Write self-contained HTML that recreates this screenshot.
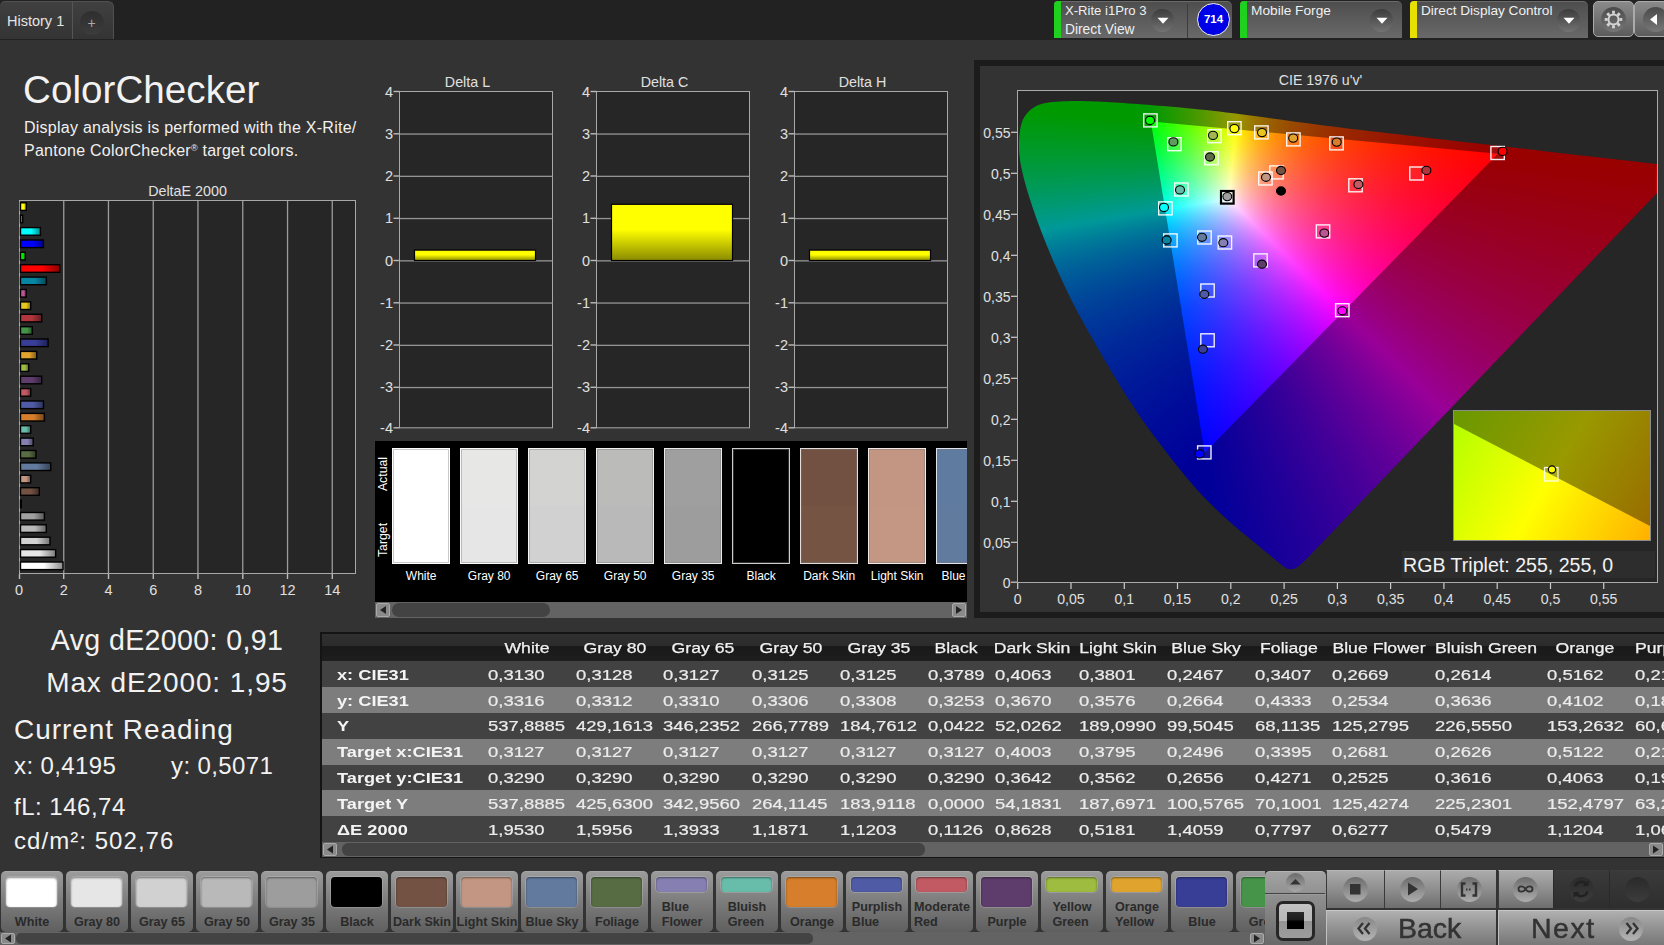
<!DOCTYPE html>
<html lang="en"><head><meta charset="utf-8"><title>ColorChecker</title>
<style>
html,body{margin:0;padding:0;width:1664px;height:945px;overflow:hidden}
body{width:1664px;height:945px;overflow:hidden;background:#333;font-family:"Liberation Sans",sans-serif;color:#eee;position:relative}
div,svg{position:absolute;box-sizing:border-box}
svg{left:0;top:0;overflow:visible}
svg text{font-family:"Liberation Sans",sans-serif}
.cie{inset:0;background:#000;isolation:isolate}
.cl{inset:0;mix-blend-mode:lighten}
.cdim{inset:0;background:rgba(0,0,0,.4)}
</style></head>
<body>
<div style="left:0;top:0;width:1664px;height:945px;overflow:hidden">
<div style="left:0;top:0;width:1664px;height:39.6px;background:#222"></div>
<div style="left:0;top:1px;width:114px;height:38px;background:linear-gradient(#404040,#343434);border:1px solid #505050;border-bottom:none;border-left:none;border-radius:5px 6px 0 0"></div>
<div style="left:72px;top:2px;width:1px;height:37px;background:#555"></div>
<div style="left:80px;top:11px;width:24px;height:24px;border-radius:12px;background:linear-gradient(#2e2e2e,#3c3c3c)"></div>
<div style="left:7px;top:13px;font-size:14.5px;color:#e4e4e4;white-space:nowrap">History 1</div>
<div style="left:87.500px;top:15px;font-size:14px;color:#aaa">+</div>
<div style="left:1054px;top:1px;width:178px;height:37px;background:linear-gradient(#4e4e4e,#696969);border-radius:4px 5px 0 0;border-top:1px solid #6a6a6a"></div><div style="left:1054px;top:1px;width:7px;height:37px;background:#1fd01f;border-radius:4px 0 0 0"></div><div style="left:1065px;top:3px;font-size:13.1px;color:#f0f0f0;white-space:nowrap">X-Rite i1Pro 3</div><div style="left:1065px;top:22px;font-size:13.8px;color:#f0f0f0;white-space:nowrap">Direct View</div><div style="left:1151px;top:8.500px;width:23px;height:23px;border-radius:12px;background:linear-gradient(#3c3c3c,#727272)"></div><svg width="1664" height="40"><path d="M1157.5 17.700 h11 l-5.500 6 z" fill="#fff"/></svg>
<div style="left:1187px;top:4px;width:1px;height:34px;background:#3c3c3c"></div>
<div style="left:1197px;top:3px;width:33px;height:33px;border-radius:17px;background:#0000e6;border:1.5px solid #f4f4f4"></div>
<div style="left:1197px;top:12.500px;width:33px;text-align:center;font-size:11.5px;font-weight:bold;color:#fff">714</div>
<div style="left:1240px;top:1px;width:162px;height:37px;background:linear-gradient(#4e4e4e,#696969);border-radius:4px 5px 0 0;border-top:1px solid #6a6a6a"></div><div style="left:1240px;top:1px;width:7px;height:37px;background:#1fd01f;border-radius:4px 0 0 0"></div><div style="left:1251px;top:3px;font-size:13.7px;color:#f0f0f0;white-space:nowrap">Mobile Forge</div><div style="left:1370px;top:8.500px;width:23px;height:23px;border-radius:12px;background:linear-gradient(#3c3c3c,#727272)"></div><svg width="1664" height="40"><path d="M1376.5 17.700 h11 l-5.500 6 z" fill="#fff"/></svg>
<div style="left:1410px;top:1px;width:178px;height:37px;background:linear-gradient(#4e4e4e,#696969);border-radius:4px 5px 0 0;border-top:1px solid #6a6a6a"></div><div style="left:1410px;top:1px;width:7px;height:37px;background:#e8e000;border-radius:4px 0 0 0"></div><div style="left:1421px;top:3px;font-size:13.6px;color:#f0f0f0;white-space:nowrap">Direct Display Control</div><div style="left:1557px;top:8.500px;width:23px;height:23px;border-radius:12px;background:linear-gradient(#3c3c3c,#727272)"></div><svg width="1664" height="40"><path d="M1563.5 17.700 h11 l-5.500 6 z" fill="#fff"/></svg>
<div style="left:1593px;top:1px;width:41px;height:36px;background:linear-gradient(#8a8a8a,#5c5c5c);border:1px solid #aaa;border-radius:5px"></div>
<div style="left:1634px;top:1px;width:41px;height:36px;background:linear-gradient(#8a8a8a,#5c5c5c);border:1px solid #aaa;border-radius:5px"></div>
<div style="left:1601px;top:7px;width:25px;height:25px;border-radius:13px;background:linear-gradient(#4a4a4a,#777)"></div>
<div style="left:1643px;top:7px;width:25px;height:25px;border-radius:13px;background:linear-gradient(#4a4a4a,#777)"></div>
<svg width="1664" height="40"><g transform="translate(1613.5,19.5)" fill="none" stroke="#d4d4d4"><circle r="5" stroke-width="2"/> <rect x="-1.4" y="-8.8" width="2.8" height="3" fill="#d4d4d4" stroke="none" transform="rotate(0)"/> <rect x="-1.4" y="-8.8" width="2.8" height="3" fill="#d4d4d4" stroke="none" transform="rotate(45)"/> <rect x="-1.4" y="-8.8" width="2.8" height="3" fill="#d4d4d4" stroke="none" transform="rotate(90)"/> <rect x="-1.4" y="-8.8" width="2.8" height="3" fill="#d4d4d4" stroke="none" transform="rotate(135)"/> <rect x="-1.4" y="-8.8" width="2.8" height="3" fill="#d4d4d4" stroke="none" transform="rotate(180)"/> <rect x="-1.4" y="-8.8" width="2.8" height="3" fill="#d4d4d4" stroke="none" transform="rotate(225)"/> <rect x="-1.4" y="-8.8" width="2.8" height="3" fill="#d4d4d4" stroke="none" transform="rotate(270)"/> <rect x="-1.4" y="-8.8" width="2.8" height="3" fill="#d4d4d4" stroke="none" transform="rotate(315)"/></g><path d="M1657 14 v11 l-7 -5.5 z" fill="#fff"/></svg>
<div style="left:23px;top:68px;font-size:38.6px;color:#f2f2f2;white-space:nowrap;letter-spacing:0.05px">ColorChecker</div>
<div style="left:24px;top:115.5px;font-size:16px;letter-spacing:.25px;line-height:23px;color:#f0f0f0;white-space:nowrap">Display analysis is performed with the X-Rite/<br>Pantone ColorChecker<span style="font-size:9px;line-height:0;position:relative;top:-5px">®</span> target colors.</div>
<svg width="1664" height="945"><defs><linearGradient id="b0"><stop offset="0" stop-color="#ffff00"/><stop offset=".55" stop-color="#ffff00"/><stop offset="1" stop-color="#8c8c00"/></linearGradient><linearGradient id="b1"><stop offset="0" stop-color="#cc44cc"/><stop offset=".55" stop-color="#cc44cc"/><stop offset="1" stop-color="#702570"/></linearGradient><linearGradient id="b2"><stop offset="0" stop-color="#00ffff"/><stop offset=".55" stop-color="#00ffff"/><stop offset="1" stop-color="#008c8c"/></linearGradient><linearGradient id="b3"><stop offset="0" stop-color="#0000ff"/><stop offset=".55" stop-color="#0000ff"/><stop offset="1" stop-color="#00008c"/></linearGradient><linearGradient id="b4"><stop offset="0" stop-color="#00ee00"/><stop offset=".55" stop-color="#00ee00"/><stop offset="1" stop-color="#008200"/></linearGradient><linearGradient id="b5"><stop offset="0" stop-color="#ff0000"/><stop offset=".55" stop-color="#ff0000"/><stop offset="1" stop-color="#8c0000"/></linearGradient><linearGradient id="b6"><stop offset="0" stop-color="#0885a1"/><stop offset=".55" stop-color="#0885a1"/><stop offset="1" stop-color="#044958"/></linearGradient><linearGradient id="b7"><stop offset="0" stop-color="#bb5695"/><stop offset=".55" stop-color="#bb5695"/><stop offset="1" stop-color="#662f51"/></linearGradient><linearGradient id="b8"><stop offset="0" stop-color="#e7c71f"/><stop offset=".55" stop-color="#e7c71f"/><stop offset="1" stop-color="#7f6d11"/></linearGradient><linearGradient id="b9"><stop offset="0" stop-color="#af363c"/><stop offset=".55" stop-color="#af363c"/><stop offset="1" stop-color="#601d21"/></linearGradient><linearGradient id="b10"><stop offset="0" stop-color="#469449"/><stop offset=".55" stop-color="#469449"/><stop offset="1" stop-color="#265128"/></linearGradient><linearGradient id="b11"><stop offset="0" stop-color="#383d96"/><stop offset=".55" stop-color="#383d96"/><stop offset="1" stop-color="#1e2152"/></linearGradient><linearGradient id="b12"><stop offset="0" stop-color="#e0a32e"/><stop offset=".55" stop-color="#e0a32e"/><stop offset="1" stop-color="#7b5919"/></linearGradient><linearGradient id="b13"><stop offset="0" stop-color="#9dbc40"/><stop offset=".55" stop-color="#9dbc40"/><stop offset="1" stop-color="#566723"/></linearGradient><linearGradient id="b14"><stop offset="0" stop-color="#5e3c6c"/><stop offset=".55" stop-color="#5e3c6c"/><stop offset="1" stop-color="#33213b"/></linearGradient><linearGradient id="b15"><stop offset="0" stop-color="#c15a63"/><stop offset=".55" stop-color="#c15a63"/><stop offset="1" stop-color="#6a3136"/></linearGradient><linearGradient id="b16"><stop offset="0" stop-color="#505ba6"/><stop offset=".55" stop-color="#505ba6"/><stop offset="1" stop-color="#2c325b"/></linearGradient><linearGradient id="b17"><stop offset="0" stop-color="#d67e2c"/><stop offset=".55" stop-color="#d67e2c"/><stop offset="1" stop-color="#754518"/></linearGradient><linearGradient id="b18"><stop offset="0" stop-color="#67bdaa"/><stop offset=".55" stop-color="#67bdaa"/><stop offset="1" stop-color="#38675d"/></linearGradient><linearGradient id="b19"><stop offset="0" stop-color="#8580b1"/><stop offset=".55" stop-color="#8580b1"/><stop offset="1" stop-color="#494661"/></linearGradient><linearGradient id="b20"><stop offset="0" stop-color="#576c43"/><stop offset=".55" stop-color="#576c43"/><stop offset="1" stop-color="#2f3b24"/></linearGradient><linearGradient id="b21"><stop offset="0" stop-color="#627a9d"/><stop offset=".55" stop-color="#627a9d"/><stop offset="1" stop-color="#354356"/></linearGradient><linearGradient id="b22"><stop offset="0" stop-color="#c29682"/><stop offset=".55" stop-color="#c29682"/><stop offset="1" stop-color="#6a5247"/></linearGradient><linearGradient id="b23"><stop offset="0" stop-color="#735244"/><stop offset=".55" stop-color="#735244"/><stop offset="1" stop-color="#3f2d25"/></linearGradient><linearGradient id="b24"><stop offset="0" stop-color="#000000"/><stop offset=".55" stop-color="#000000"/><stop offset="1" stop-color="#000000"/></linearGradient><linearGradient id="b25"><stop offset="0" stop-color="#a0a0a0"/><stop offset=".55" stop-color="#a0a0a0"/><stop offset="1" stop-color="#585858"/></linearGradient><linearGradient id="b26"><stop offset="0" stop-color="#b9b9b9"/><stop offset=".55" stop-color="#b9b9b9"/><stop offset="1" stop-color="#656565"/></linearGradient><linearGradient id="b27"><stop offset="0" stop-color="#d2d2d2"/><stop offset=".55" stop-color="#d2d2d2"/><stop offset="1" stop-color="#737373"/></linearGradient><linearGradient id="b28"><stop offset="0" stop-color="#e6e6e6"/><stop offset=".55" stop-color="#e6e6e6"/><stop offset="1" stop-color="#7e7e7e"/></linearGradient><linearGradient id="b29"><stop offset="0" stop-color="#ffffff"/><stop offset=".55" stop-color="#ffffff"/><stop offset="1" stop-color="#8c8c8c"/></linearGradient><linearGradient id="yb" x1="0" y1="0" x2="0" y2="1"><stop offset="0" stop-color="#ffff00"/><stop offset=".45" stop-color="#ffff00"/><stop offset="1" stop-color="#8a8a00"/></linearGradient></defs><rect x="19.5" y="200.5" width="336" height="373" fill="#262626" stroke="#a8a8a8"/><rect x="63.1" y="201" width="1.3" height="372" fill="#9c9c9c"/><rect x="63.0" y="574" width="1.4" height="5" fill="#bbb"/><rect x="107.8" y="201" width="1.3" height="372" fill="#9c9c9c"/><rect x="107.8" y="574" width="1.4" height="5" fill="#bbb"/><rect x="152.6" y="201" width="1.3" height="372" fill="#9c9c9c"/><rect x="152.6" y="574" width="1.4" height="5" fill="#bbb"/><rect x="197.3" y="201" width="1.3" height="372" fill="#9c9c9c"/><rect x="197.3" y="574" width="1.4" height="5" fill="#bbb"/><rect x="242.1" y="201" width="1.3" height="372" fill="#9c9c9c"/><rect x="242.1" y="574" width="1.4" height="5" fill="#bbb"/><rect x="286.9" y="201" width="1.3" height="372" fill="#9c9c9c"/><rect x="286.8" y="574" width="1.4" height="5" fill="#bbb"/><rect x="331.6" y="201" width="1.3" height="372" fill="#9c9c9c"/><rect x="331.6" y="574" width="1.4" height="5" fill="#bbb"/><rect x="18.8" y="574" width="1.4" height="5" fill="#bbb"/><text x="19.0" y="595" font-size="14.5" text-anchor="middle" fill="#e0e0e0" font-weight="normal" >0</text><text x="63.8" y="595" font-size="14.5" text-anchor="middle" fill="#e0e0e0" font-weight="normal" >2</text><text x="108.5" y="595" font-size="14.5" text-anchor="middle" fill="#e0e0e0" font-weight="normal" >4</text><text x="153.2" y="595" font-size="14.5" text-anchor="middle" fill="#e0e0e0" font-weight="normal" >6</text><text x="198.0" y="595" font-size="14.5" text-anchor="middle" fill="#e0e0e0" font-weight="normal" >8</text><text x="242.8" y="595" font-size="14.5" text-anchor="middle" fill="#e0e0e0" font-weight="normal" >10</text><text x="287.5" y="595" font-size="14.5" text-anchor="middle" fill="#e0e0e0" font-weight="normal" >12</text><text x="332.2" y="595" font-size="14.5" text-anchor="middle" fill="#e0e0e0" font-weight="normal" >14</text><text x="187.5" y="196" font-size="14.3" text-anchor="middle" fill="#e0e0e0" font-weight="normal" >DeltaE 2000</text><rect x="20.5" y="202.8" width="5.8" height="7.6" fill="url(#b0)" stroke="#000" stroke-width="1.4"/><rect x="20.5" y="215.2" width="2.2" height="7.6" fill="url(#b1)" stroke="#000" stroke-width="1.4"/><rect x="20.5" y="227.6" width="19.9" height="7.6" fill="url(#b2)" stroke="#000" stroke-width="1.4"/><rect x="20.5" y="240.0" width="22.9" height="7.6" fill="url(#b3)" stroke="#000" stroke-width="1.4"/><rect x="20.5" y="252.3" width="4.8" height="7.6" fill="url(#b4)" stroke="#000" stroke-width="1.4"/><rect x="20.5" y="264.7" width="39.2" height="7.6" fill="url(#b5)" stroke="#000" stroke-width="1.4"/><rect x="20.5" y="277.1" width="25.9" height="7.6" fill="url(#b6)" stroke="#000" stroke-width="1.4"/><rect x="20.5" y="289.5" width="5.7" height="7.6" fill="url(#b7)" stroke="#000" stroke-width="1.4"/><rect x="20.5" y="301.9" width="10.2" height="7.6" fill="url(#b8)" stroke="#000" stroke-width="1.4"/><rect x="20.5" y="314.3" width="21.2" height="7.6" fill="url(#b9)" stroke="#000" stroke-width="1.4"/><rect x="20.5" y="326.7" width="11.8" height="7.6" fill="url(#b10)" stroke="#000" stroke-width="1.4"/><rect x="20.5" y="339.0" width="27.6" height="7.6" fill="url(#b11)" stroke="#000" stroke-width="1.4"/><rect x="20.5" y="351.4" width="16.2" height="7.6" fill="url(#b12)" stroke="#000" stroke-width="1.4"/><rect x="20.5" y="363.8" width="8.2" height="7.6" fill="url(#b13)" stroke="#000" stroke-width="1.4"/><rect x="20.5" y="376.2" width="21.2" height="7.6" fill="url(#b14)" stroke="#000" stroke-width="1.4"/><rect x="20.5" y="388.6" width="10.2" height="7.6" fill="url(#b15)" stroke="#000" stroke-width="1.4"/><rect x="20.5" y="401.0" width="23.0" height="7.6" fill="url(#b16)" stroke="#000" stroke-width="1.4"/><rect x="20.5" y="413.4" width="23.9" height="7.6" fill="url(#b17)" stroke="#000" stroke-width="1.4"/><rect x="20.5" y="425.7" width="10.2" height="7.6" fill="url(#b18)" stroke="#000" stroke-width="1.4"/><rect x="20.5" y="438.1" width="12.7" height="7.6" fill="url(#b19)" stroke="#000" stroke-width="1.4"/><rect x="20.5" y="450.5" width="15.5" height="7.6" fill="url(#b20)" stroke="#000" stroke-width="1.4"/><rect x="20.5" y="462.9" width="30.2" height="7.6" fill="url(#b21)" stroke="#000" stroke-width="1.4"/><rect x="20.5" y="475.3" width="10.2" height="7.6" fill="url(#b22)" stroke="#000" stroke-width="1.4"/><rect x="20.5" y="487.7" width="18.8" height="7.6" fill="url(#b23)" stroke="#000" stroke-width="1.4"/><rect x="20.5" y="500.1" width="0.8" height="7.6" fill="url(#b24)" stroke="#000" stroke-width="1.4"/><rect x="20.5" y="512.5" width="23.9" height="7.6" fill="url(#b25)" stroke="#000" stroke-width="1.4"/><rect x="20.5" y="524.8" width="25.8" height="7.6" fill="url(#b26)" stroke="#000" stroke-width="1.4"/><rect x="20.5" y="537.2" width="29.5" height="7.6" fill="url(#b27)" stroke="#000" stroke-width="1.4"/><rect x="20.5" y="549.6" width="35.1" height="7.6" fill="url(#b28)" stroke="#000" stroke-width="1.4"/><rect x="20.5" y="562.0" width="42.5" height="7.6" fill="url(#b29)" stroke="#000" stroke-width="1.4"/><rect x="399.5" y="91.5" width="153.0" height="336.3" fill="#262626" stroke="#a8a8a8"/><rect x="393.5" y="427.1" width="6" height="1.4" fill="#bbb"/><text x="393.0" y="432.8" font-size="14.5" text-anchor="end" fill="#e0e0e0" font-weight="normal" >-4</text><rect x="399.5" y="386.9" width="153.0" height="1.3" fill="#949494"/><rect x="393.5" y="386.6" width="6" height="1.4" fill="#bbb"/><text x="393.0" y="392.2" font-size="14.5" text-anchor="end" fill="#e0e0e0" font-weight="normal" >-3</text><rect x="399.5" y="344.7" width="153.0" height="1.3" fill="#949494"/><rect x="393.5" y="344.3" width="6" height="1.4" fill="#bbb"/><text x="393.0" y="350.0" font-size="14.5" text-anchor="end" fill="#e0e0e0" font-weight="normal" >-2</text><rect x="399.5" y="302.4" width="153.0" height="1.3" fill="#949494"/><rect x="393.5" y="302.1" width="6" height="1.4" fill="#bbb"/><text x="393.0" y="307.8" font-size="14.5" text-anchor="end" fill="#e0e0e0" font-weight="normal" >-1</text><rect x="399.5" y="260.2" width="153.0" height="1.3" fill="#949494"/><rect x="393.5" y="259.8" width="6" height="1.4" fill="#bbb"/><text x="393.0" y="265.5" font-size="14.5" text-anchor="end" fill="#e0e0e0" font-weight="normal" >0</text><rect x="399.5" y="217.9" width="153.0" height="1.3" fill="#949494"/><rect x="393.5" y="217.6" width="6" height="1.4" fill="#bbb"/><text x="393.0" y="223.2" font-size="14.5" text-anchor="end" fill="#e0e0e0" font-weight="normal" >1</text><rect x="399.5" y="175.7" width="153.0" height="1.3" fill="#949494"/><rect x="393.5" y="175.3" width="6" height="1.4" fill="#bbb"/><text x="393.0" y="181.0" font-size="14.5" text-anchor="end" fill="#e0e0e0" font-weight="normal" >2</text><rect x="399.5" y="133.4" width="153.0" height="1.3" fill="#949494"/><rect x="393.5" y="133.1" width="6" height="1.4" fill="#bbb"/><text x="393.0" y="138.8" font-size="14.5" text-anchor="end" fill="#e0e0e0" font-weight="normal" >3</text><rect x="393.5" y="90.8" width="6" height="1.4" fill="#bbb"/><text x="393.0" y="96.5" font-size="14.5" text-anchor="end" fill="#e0e0e0" font-weight="normal" >4</text><text x="467.5" y="87" font-size="14.3" text-anchor="middle" fill="#e0e0e0" font-weight="normal" >Delta L</text><rect x="414.5" y="250.1" width="121.0" height="10.4" fill="url(#yb)" stroke="#000" stroke-width="1.2"/><rect x="596.5" y="91.5" width="153.0" height="336.3" fill="#262626" stroke="#a8a8a8"/><rect x="590.5" y="427.1" width="6" height="1.4" fill="#bbb"/><text x="590.0" y="432.8" font-size="14.5" text-anchor="end" fill="#e0e0e0" font-weight="normal" >-4</text><rect x="596.5" y="386.9" width="153.0" height="1.3" fill="#949494"/><rect x="590.5" y="386.6" width="6" height="1.4" fill="#bbb"/><text x="590.0" y="392.2" font-size="14.5" text-anchor="end" fill="#e0e0e0" font-weight="normal" >-3</text><rect x="596.5" y="344.7" width="153.0" height="1.3" fill="#949494"/><rect x="590.5" y="344.3" width="6" height="1.4" fill="#bbb"/><text x="590.0" y="350.0" font-size="14.5" text-anchor="end" fill="#e0e0e0" font-weight="normal" >-2</text><rect x="596.5" y="302.4" width="153.0" height="1.3" fill="#949494"/><rect x="590.5" y="302.1" width="6" height="1.4" fill="#bbb"/><text x="590.0" y="307.8" font-size="14.5" text-anchor="end" fill="#e0e0e0" font-weight="normal" >-1</text><rect x="596.5" y="260.2" width="153.0" height="1.3" fill="#949494"/><rect x="590.5" y="259.8" width="6" height="1.4" fill="#bbb"/><text x="590.0" y="265.5" font-size="14.5" text-anchor="end" fill="#e0e0e0" font-weight="normal" >0</text><rect x="596.5" y="217.9" width="153.0" height="1.3" fill="#949494"/><rect x="590.5" y="217.6" width="6" height="1.4" fill="#bbb"/><text x="590.0" y="223.2" font-size="14.5" text-anchor="end" fill="#e0e0e0" font-weight="normal" >1</text><rect x="596.5" y="175.7" width="153.0" height="1.3" fill="#949494"/><rect x="590.5" y="175.3" width="6" height="1.4" fill="#bbb"/><text x="590.0" y="181.0" font-size="14.5" text-anchor="end" fill="#e0e0e0" font-weight="normal" >2</text><rect x="596.5" y="133.4" width="153.0" height="1.3" fill="#949494"/><rect x="590.5" y="133.1" width="6" height="1.4" fill="#bbb"/><text x="590.0" y="138.8" font-size="14.5" text-anchor="end" fill="#e0e0e0" font-weight="normal" >3</text><rect x="590.5" y="90.8" width="6" height="1.4" fill="#bbb"/><text x="590.0" y="96.5" font-size="14.5" text-anchor="end" fill="#e0e0e0" font-weight="normal" >4</text><text x="664.5" y="87" font-size="14.3" text-anchor="middle" fill="#e0e0e0" font-weight="normal" >Delta C</text><rect x="611.5" y="204.3" width="121.0" height="56.2" fill="url(#yb)" stroke="#000" stroke-width="1.2"/><rect x="794.5" y="91.5" width="153.0" height="336.3" fill="#262626" stroke="#a8a8a8"/><rect x="788.5" y="427.1" width="6" height="1.4" fill="#bbb"/><text x="788.0" y="432.8" font-size="14.5" text-anchor="end" fill="#e0e0e0" font-weight="normal" >-4</text><rect x="794.5" y="386.9" width="153.0" height="1.3" fill="#949494"/><rect x="788.5" y="386.6" width="6" height="1.4" fill="#bbb"/><text x="788.0" y="392.2" font-size="14.5" text-anchor="end" fill="#e0e0e0" font-weight="normal" >-3</text><rect x="794.5" y="344.7" width="153.0" height="1.3" fill="#949494"/><rect x="788.5" y="344.3" width="6" height="1.4" fill="#bbb"/><text x="788.0" y="350.0" font-size="14.5" text-anchor="end" fill="#e0e0e0" font-weight="normal" >-2</text><rect x="794.5" y="302.4" width="153.0" height="1.3" fill="#949494"/><rect x="788.5" y="302.1" width="6" height="1.4" fill="#bbb"/><text x="788.0" y="307.8" font-size="14.5" text-anchor="end" fill="#e0e0e0" font-weight="normal" >-1</text><rect x="794.5" y="260.2" width="153.0" height="1.3" fill="#949494"/><rect x="788.5" y="259.8" width="6" height="1.4" fill="#bbb"/><text x="788.0" y="265.5" font-size="14.5" text-anchor="end" fill="#e0e0e0" font-weight="normal" >0</text><rect x="794.5" y="217.9" width="153.0" height="1.3" fill="#949494"/><rect x="788.5" y="217.6" width="6" height="1.4" fill="#bbb"/><text x="788.0" y="223.2" font-size="14.5" text-anchor="end" fill="#e0e0e0" font-weight="normal" >1</text><rect x="794.5" y="175.7" width="153.0" height="1.3" fill="#949494"/><rect x="788.5" y="175.3" width="6" height="1.4" fill="#bbb"/><text x="788.0" y="181.0" font-size="14.5" text-anchor="end" fill="#e0e0e0" font-weight="normal" >2</text><rect x="794.5" y="133.4" width="153.0" height="1.3" fill="#949494"/><rect x="788.5" y="133.1" width="6" height="1.4" fill="#bbb"/><text x="788.0" y="138.8" font-size="14.5" text-anchor="end" fill="#e0e0e0" font-weight="normal" >3</text><rect x="788.5" y="90.8" width="6" height="1.4" fill="#bbb"/><text x="788.0" y="96.5" font-size="14.5" text-anchor="end" fill="#e0e0e0" font-weight="normal" >4</text><text x="862.5" y="87" font-size="14.3" text-anchor="middle" fill="#e0e0e0" font-weight="normal" >Delta H</text><rect x="809.5" y="250.1" width="121.0" height="10.4" fill="url(#yb)" stroke="#000" stroke-width="1.2"/></svg>
<div style="left:375px;top:441px;width:592px;height:161px;background:#000"></div>
<div style="left:375px;top:441px;width:592px;height:161px;overflow:hidden"><div style="left:17.2px;top:6.7px;width:57.8px;height:116.3px;background:linear-gradient(#ffffff 50%,#ffffff 50%);border:1px solid rgba(255,255,255,.8);box-shadow:inset 0 0 0 1px rgba(120,120,120,.4)"></div><div style="left:-2.8px;top:128px;width:98px;text-align:center;font-size:12px;color:#fff;white-space:nowrap">White</div><div style="left:85.2px;top:6.7px;width:57.8px;height:116.3px;background:linear-gradient(#e7e7e6 50%,#e6e6e6 50%);border:1px solid rgba(255,255,255,.8);box-shadow:inset 0 0 0 1px rgba(120,120,120,.4)"></div><div style="left:65.2px;top:128px;width:98px;text-align:center;font-size:12px;color:#fff;white-space:nowrap">Gray 80</div><div style="left:153.2px;top:6.7px;width:57.8px;height:116.3px;background:linear-gradient(#d3d3d2 50%,#d1d1d1 50%);border:1px solid rgba(255,255,255,.8);box-shadow:inset 0 0 0 1px rgba(120,120,120,.4)"></div><div style="left:133.2px;top:128px;width:98px;text-align:center;font-size:12px;color:#fff;white-space:nowrap">Gray 65</div><div style="left:221.2px;top:6.7px;width:57.8px;height:116.3px;background:linear-gradient(#bbbbba 50%,#b9b9b9 50%);border:1px solid rgba(255,255,255,.8);box-shadow:inset 0 0 0 1px rgba(120,120,120,.4)"></div><div style="left:201.2px;top:128px;width:98px;text-align:center;font-size:12px;color:#fff;white-space:nowrap">Gray 50</div><div style="left:289.2px;top:6.7px;width:57.8px;height:116.3px;background:linear-gradient(#9e9f9e 50%,#9d9d9d 50%);border:1px solid rgba(255,255,255,.8);box-shadow:inset 0 0 0 1px rgba(120,120,120,.4)"></div><div style="left:269.2px;top:128px;width:98px;text-align:center;font-size:12px;color:#fff;white-space:nowrap">Gray 35</div><div style="left:357.2px;top:6.7px;width:57.8px;height:116.3px;background:linear-gradient(#000000 50%,#000000 50%);border:1px solid rgba(255,255,255,.8);box-shadow:inset 0 0 0 1px rgba(120,120,120,.4)"></div><div style="left:337.2px;top:128px;width:98px;text-align:center;font-size:12px;color:#fff;white-space:nowrap">Black</div><div style="left:425.2px;top:6.7px;width:57.8px;height:116.3px;background:linear-gradient(#725042 50%,#755444 50%);border:1px solid rgba(255,255,255,.8);box-shadow:inset 0 0 0 1px rgba(120,120,120,.4)"></div><div style="left:405.2px;top:128px;width:98px;text-align:center;font-size:12px;color:#fff;white-space:nowrap">Dark Skin</div><div style="left:493.2px;top:6.7px;width:57.8px;height:116.3px;background:linear-gradient(#c29682 50%,#c39783 50%);border:1px solid rgba(255,255,255,.8);box-shadow:inset 0 0 0 1px rgba(120,120,120,.4)"></div><div style="left:473.2px;top:128px;width:98px;text-align:center;font-size:12px;color:#fff;white-space:nowrap">Light Skin</div><div style="left:561.2px;top:6.7px;width:57.8px;height:116.3px;background:linear-gradient(#5f7ba0 50%,#617b9f 50%);border:1px solid rgba(255,255,255,.8);box-shadow:inset 0 0 0 1px rgba(120,120,120,.4)"></div><div style="left:541.2px;top:128px;width:98px;text-align:center;font-size:12px;color:#fff;white-space:nowrap">Blue Sky</div><div style="left:-22px;top:25.500px;width:60px;text-align:center;font-size:12.3px;color:#fff;transform:rotate(-90deg)">Actual</div><div style="left:-22px;top:91.500px;width:60px;text-align:center;font-size:12.3px;color:#fff;transform:rotate(-90deg)">Target</div></div>
<div style="left:375px;top:602px;width:592px;height:16px;background:#636363"></div><div style="left:392px;top:603px;width:158px;height:14px;background:#434343;border-radius:7px"></div><div style="left:376px;top:603px;width:14px;height:14px;background:#8a8a8a;border:1px solid #aaa;border-radius:2px"></div><div style="left:952px;top:603px;width:14px;height:14px;background:#8a8a8a;border:1px solid #aaa;border-radius:2px"></div><svg width="1664" height="945"><path d="M386 606.0 v8 l-6 -4 z" fill="#222"/><path d="M956 606.0 v8 l6 -4 z" fill="#222"/></svg>
<div style="left:974px;top:60px;width:700px;height:558px;border:6px solid #1c1c1c;border-top-width:6.5px;background:#333"></div>
<div style="left:1017px;top:90px;width:641px;height:492.5px;background:#262626;border:1px solid #aaa"></div>
<div style="left:1017.7px;top:90.7px;width:639.6px;height:491.4px;overflow:hidden"><div class="cie" style="clip-path:polygon(273.6px 477.8px,273.5px 477.9px,273.3px 478.1px,272.9px 478.3px,272.4px 478.3px,271.8px 478.3px,270.9px 478.3px,269.9px 478.1px,268.7px 477.6px,267.4px 476.8px,266.0px 475.8px,264.3px 474.5px,262.2px 472.9px,259.8px 470.9px,257.0px 468.5px,253.8px 465.8px,250.1px 462.7px,245.5px 459.0px,240.2px 454.6px,234.9px 450.3px,230.2px 446.4px,226.5px 443.3px,223.2px 440.7px,220.1px 438.0px,216.7px 435.1px,212.8px 431.7px,208.7px 428.1px,204.5px 424.3px,200.0px 420.1px,195.4px 415.6px,190.6px 410.9px,185.6px 405.7px,180.0px 399.7px,174.0px 392.8px,167.5px 385.2px,160.7px 376.8px,153.5px 367.7px,145.9px 357.9px,137.8px 347.3px,129.5px 336.0px,121.1px 324.0px,112.7px 311.3px,104.1px 297.7px,95.6px 283.8px,87.1px 269.6px,78.7px 255.1px,70.3px 240.3px,62.1px 225.4px,54.4px 210.7px,47.4px 196.2px,40.7px 181.8px,34.5px 167.7px,28.9px 154.2px,23.8px 141.4px,19.2px 129.1px,15.1px 117.4px,11.6px 106.6px,8.6px 96.6px,6.1px 87.5px,4.1px 79.0px,2.6px 71.2px,1.7px 64.1px,1.3px 57.7px,1.3px 51.9px,1.5px 46.6px,2.0px 41.6px,2.7px 37.2px,3.7px 33.2px,4.9px 29.6px,6.6px 26.4px,8.5px 23.5px,10.7px 21.1px,13.1px 18.9px,15.7px 17.0px,18.5px 15.4px,21.5px 14.1px,24.6px 13.0px,27.9px 12.2px,31.3px 11.7px,34.8px 11.3px,38.4px 11.0px,42.0px 10.7px,45.8px 10.6px,49.5px 10.5px,53.3px 10.4px,57.1px 10.4px,60.9px 10.4px,64.7px 10.4px,68.5px 10.5px,72.4px 10.6px,76.4px 10.7px,80.3px 10.9px,84.4px 11.1px,88.6px 11.3px,92.8px 11.5px,97.1px 11.8px,101.5px 12.1px,106.0px 12.4px,110.6px 12.7px,115.3px 13.0px,120.1px 13.4px,125.0px 13.7px,130.0px 14.1px,135.2px 14.5px,140.5px 15.0px,145.9px 15.4px,151.5px 15.9px,157.3px 16.4px,163.1px 16.9px,169.2px 17.5px,175.3px 18.1px,181.7px 18.7px,188.2px 19.4px,194.8px 20.1px,201.7px 20.9px,208.7px 21.7px,215.9px 22.6px,223.2px 23.5px,230.7px 24.5px,238.4px 25.6px,246.3px 26.6px,254.4px 27.7px,262.6px 28.9px,271.0px 30.0px,279.5px 31.2px,288.2px 32.4px,297.1px 33.5px,306.2px 34.7px,315.3px 35.9px,324.6px 37.0px,334.1px 38.2px,343.6px 39.3px,353.2px 40.5px,362.9px 41.6px,372.7px 42.8px,382.5px 43.9px,392.2px 45.0px,401.7px 46.1px,411.2px 47.2px,420.6px 48.3px,429.9px 49.4px,439.2px 50.5px,448.5px 51.5px,457.7px 52.6px,466.6px 53.6px,475.3px 54.6px,483.7px 55.5px,491.9px 56.5px,499.9px 57.4px,507.6px 58.3px,515.1px 59.1px,522.4px 60.0px,529.3px 60.8px,535.6px 61.5px,541.2px 62.2px,547.2px 62.9px,554.3px 63.7px,563.3px 64.7px,573.4px 65.9px,583.7px 67.0px,593.0px 68.1px,601.0px 69.0px,608.3px 69.9px,615.1px 70.6px,621.2px 71.4px,626.7px 72.0px,631.6px 72.5px,635.9px 73.0px,639.8px 73.5px,643.2px 73.9px,645.9px 74.2px,648.4px 74.5px,650.9px 74.7px,653.5px 75.1px,656.2px 75.4px,658.5px 75.6px,660.5px 75.9px,661.9px 76.0px,663.0px 76.1px,663.7px 76.2px,664.2px 76.3px,364.3px 389.3px,289.3px 467.9px,282.3px 474.3px,277.3px 477.9px,273.3px 478.9px)"><div class="cl" style="background:conic-gradient(from 0deg at 186.93px 362.08px,#920000 0deg,#c20000 2.5deg,#f70000 5deg,#ff0000 5.5deg,#ff0000 170.5deg,#000000 171deg,#000000 350.5deg,#030000 351deg,#360000 354.5deg,#660000 357.5deg,#920000 360deg),conic-gradient(from 0deg at 133.19px 30.71px,#ff0000 0deg,#ff0000 134.5deg,#fd0000 135deg,#d80000 138.5deg,#b20000 142.5deg,#960000 146deg,#780000 150deg,#5a0000 154.5deg,#390000 160deg,#160000 166.5deg,#000000 171deg,#000000 350.5deg,#ff0000 351deg,#ff0000 360deg);background-blend-mode:darken,normal"></div><div class="cl" style="background:conic-gradient(from 0deg at 186.93px 362.08px,#00ff00 0deg,#00ff00 5deg,#00fc00 5.5deg,#00de00 7deg,#00c400 8.5deg,#00af00 10deg,#009700 12deg,#008300 14deg,#007200 16deg,#006000 18.5deg,#005000 21deg,#003a00 25.5deg,#002500 31deg,#001100 37.5deg,#000000 44.5deg,#000000 224deg,#00ff00 224.5deg,#00ff00 360deg),conic-gradient(from 0deg at 480.23px 63.16px,#00ff00 0deg,#00ff00 44deg,#000000 44.5deg,#000000 224.5deg,#001500 232deg,#002b00 238deg,#004400 243.5deg,#006000 248deg,#006f00 250deg,#008100 252deg,#009000 253.5deg,#00a100 255deg,#00b500 256.5deg,#00cc00 258deg,#00e800 259.5deg,#00fd00 260.5deg,#00ff00 261deg,#00ff00 360deg);background-blend-mode:darken,normal"></div><div class="cl" style="background:conic-gradient(from 0deg at 133.19px 30.71px,#000000 0deg,#000001 95.5deg,#000020 102.5deg,#00003d 108.5deg,#00005a 114deg,#000078 119deg,#000097 123.5deg,#0000b7 127.5deg,#0000d2 130.5deg,#0000fb 134.5deg,#0000ff 135deg,#0000ff 275deg,#000000 275.5deg,#000000 360deg),conic-gradient(from 0deg at 480.23px 63.16px,#000000 0deg,#000000 95deg,#0000ff 95.5deg,#0000ff 260.5deg,#0000b6 264deg,#00009a 265.5deg,#000076 267.5deg,#000055 269.5deg,#00002f 272deg,#000005 275deg,#000000 275.5deg,#000000 360deg);background-blend-mode:darken,normal"></div><div class="cdim" style="clip-path:polygon(evenodd,0 0,639px 0,639px 491px,0 491px,0 0,480.23px 63.16px,133.19px 30.71px,186.93px 362.08px,480.23px 63.16px)"></div></div></div>
<svg width="1664" height="945"><text x="1320.5" y="84.8" font-size="14.2" text-anchor="middle" fill="#e0e0e0" font-weight="normal" >CIE 1976 u'v'</text><rect x="1017.1" y="583" width="1.2" height="6" fill="#ccc"/><text x="1017.7" y="603.6" font-size="14.1" text-anchor="middle" fill="#e0e0e0" font-weight="normal" >0</text><rect x="1011" y="581.6" width="6" height="1.2" fill="#ccc"/><text x="1010.5" y="588.0" font-size="14" text-anchor="end" fill="#e0e0e0" font-weight="normal" >0</text><rect x="1070.4" y="583" width="1.2" height="6" fill="#ccc"/><text x="1071.0" y="603.6" font-size="14.1" text-anchor="middle" fill="#e0e0e0" font-weight="normal" >0,05</text><rect x="1011" y="541.7" width="6" height="1.2" fill="#ccc"/><text x="1010.5" y="548.1" font-size="14" text-anchor="end" fill="#e0e0e0" font-weight="normal" >0,05</text><rect x="1123.7" y="583" width="1.2" height="6" fill="#ccc"/><text x="1124.2" y="603.6" font-size="14.1" text-anchor="middle" fill="#e0e0e0" font-weight="normal" >0,1</text><rect x="1011" y="500.7" width="6" height="1.2" fill="#ccc"/><text x="1010.5" y="507.1" font-size="14" text-anchor="end" fill="#e0e0e0" font-weight="normal" >0,1</text><rect x="1176.9" y="583" width="1.2" height="6" fill="#ccc"/><text x="1177.5" y="603.6" font-size="14.1" text-anchor="middle" fill="#e0e0e0" font-weight="normal" >0,15</text><rect x="1011" y="459.7" width="6" height="1.2" fill="#ccc"/><text x="1010.5" y="466.1" font-size="14" text-anchor="end" fill="#e0e0e0" font-weight="normal" >0,15</text><rect x="1230.2" y="583" width="1.2" height="6" fill="#ccc"/><text x="1230.8" y="603.6" font-size="14.1" text-anchor="middle" fill="#e0e0e0" font-weight="normal" >0,2</text><rect x="1011" y="418.7" width="6" height="1.2" fill="#ccc"/><text x="1010.5" y="425.1" font-size="14" text-anchor="end" fill="#e0e0e0" font-weight="normal" >0,2</text><rect x="1283.5" y="583" width="1.2" height="6" fill="#ccc"/><text x="1284.1" y="603.6" font-size="14.1" text-anchor="middle" fill="#e0e0e0" font-weight="normal" >0,25</text><rect x="1011" y="377.7" width="6" height="1.2" fill="#ccc"/><text x="1010.5" y="384.1" font-size="14" text-anchor="end" fill="#e0e0e0" font-weight="normal" >0,25</text><rect x="1336.8" y="583" width="1.2" height="6" fill="#ccc"/><text x="1337.4" y="603.6" font-size="14.1" text-anchor="middle" fill="#e0e0e0" font-weight="normal" >0,3</text><rect x="1011" y="336.7" width="6" height="1.2" fill="#ccc"/><text x="1010.5" y="343.1" font-size="14" text-anchor="end" fill="#e0e0e0" font-weight="normal" >0,3</text><rect x="1390.0" y="583" width="1.2" height="6" fill="#ccc"/><text x="1390.6" y="603.6" font-size="14.1" text-anchor="middle" fill="#e0e0e0" font-weight="normal" >0,35</text><rect x="1011" y="295.7" width="6" height="1.2" fill="#ccc"/><text x="1010.5" y="302.1" font-size="14" text-anchor="end" fill="#e0e0e0" font-weight="normal" >0,35</text><rect x="1443.3" y="583" width="1.2" height="6" fill="#ccc"/><text x="1443.9" y="603.6" font-size="14.1" text-anchor="middle" fill="#e0e0e0" font-weight="normal" >0,4</text><rect x="1011" y="254.7" width="6" height="1.2" fill="#ccc"/><text x="1010.5" y="261.1" font-size="14" text-anchor="end" fill="#e0e0e0" font-weight="normal" >0,4</text><rect x="1496.6" y="583" width="1.2" height="6" fill="#ccc"/><text x="1497.2" y="603.6" font-size="14.1" text-anchor="middle" fill="#e0e0e0" font-weight="normal" >0,45</text><rect x="1011" y="213.7" width="6" height="1.2" fill="#ccc"/><text x="1010.5" y="220.1" font-size="14" text-anchor="end" fill="#e0e0e0" font-weight="normal" >0,45</text><rect x="1549.9" y="583" width="1.2" height="6" fill="#ccc"/><text x="1550.5" y="603.6" font-size="14.1" text-anchor="middle" fill="#e0e0e0" font-weight="normal" >0,5</text><rect x="1011" y="172.7" width="6" height="1.2" fill="#ccc"/><text x="1010.5" y="179.1" font-size="14" text-anchor="end" fill="#e0e0e0" font-weight="normal" >0,5</text><rect x="1603.1" y="583" width="1.2" height="6" fill="#ccc"/><text x="1603.7" y="603.6" font-size="14.1" text-anchor="middle" fill="#e0e0e0" font-weight="normal" >0,55</text><rect x="1011" y="131.7" width="6" height="1.2" fill="#ccc"/><text x="1010.5" y="138.1" font-size="14" text-anchor="end" fill="#e0e0e0" font-weight="normal" >0,55</text><rect x="1143.7" y="113.9" width="13.4" height="13" fill="rgba(255,255,255,.06)" stroke="rgba(255,255,255,.92)" stroke-width="1.4"/><rect x="1167.7" y="137.7" width="13.4" height="13" fill="rgba(255,255,255,.06)" stroke="rgba(255,255,255,.92)" stroke-width="1.4"/><rect x="1207.7" y="129.7" width="13.4" height="13" fill="rgba(255,255,255,.06)" stroke="rgba(255,255,255,.92)" stroke-width="1.4"/><rect x="1227.7" y="121.7" width="13.4" height="13" fill="rgba(255,255,255,.06)" stroke="rgba(255,255,255,.92)" stroke-width="1.4"/><rect x="1254.7" y="125.9" width="13.4" height="13" fill="rgba(255,255,255,.06)" stroke="rgba(255,255,255,.92)" stroke-width="1.4"/><rect x="1286.7" y="132.9" width="13.4" height="13" fill="rgba(255,255,255,.06)" stroke="rgba(255,255,255,.92)" stroke-width="1.4"/><rect x="1329.8" y="136.9" width="13.4" height="13" fill="rgba(255,255,255,.06)" stroke="rgba(255,255,255,.92)" stroke-width="1.4"/><rect x="1204.8" y="151.8" width="13.4" height="13" fill="rgba(255,255,255,.06)" stroke="rgba(255,255,255,.92)" stroke-width="1.4"/><rect x="1269.8" y="165.9" width="13.4" height="13" fill="rgba(255,255,255,.06)" stroke="rgba(255,255,255,.92)" stroke-width="1.4"/><rect x="1258.7" y="172.0" width="13.4" height="13" fill="rgba(255,255,255,.06)" stroke="rgba(255,255,255,.92)" stroke-width="1.4"/><rect x="1348.8" y="178.8" width="13.4" height="13" fill="rgba(255,255,255,.06)" stroke="rgba(255,255,255,.92)" stroke-width="1.4"/><rect x="1174.7" y="183.0" width="13.4" height="13" fill="rgba(255,255,255,.06)" stroke="rgba(255,255,255,.92)" stroke-width="1.4"/><rect x="1158.7" y="201.9" width="13.4" height="13" fill="rgba(255,255,255,.06)" stroke="rgba(255,255,255,.92)" stroke-width="1.4"/><rect x="1163.7" y="233.9" width="13.4" height="13" fill="rgba(255,255,255,.06)" stroke="rgba(255,255,255,.92)" stroke-width="1.4"/><rect x="1197.8" y="231.0" width="13.4" height="13" fill="rgba(255,255,255,.06)" stroke="rgba(255,255,255,.92)" stroke-width="1.4"/><rect x="1218.2" y="236.0" width="13.4" height="13" fill="rgba(255,255,255,.06)" stroke="rgba(255,255,255,.92)" stroke-width="1.4"/><rect x="1316.3" y="224.9" width="13.4" height="13" fill="rgba(255,255,255,.06)" stroke="rgba(255,255,255,.92)" stroke-width="1.4"/><rect x="1253.8" y="253.9" width="13.4" height="13" fill="rgba(255,255,255,.06)" stroke="rgba(255,255,255,.92)" stroke-width="1.4"/><rect x="1490.9" y="146.5" width="13.4" height="13" fill="rgba(255,255,255,.06)" stroke="rgba(255,255,255,.92)" stroke-width="1.4"/><rect x="1409.8" y="167.0" width="13.4" height="13" fill="rgba(255,255,255,.06)" stroke="rgba(255,255,255,.92)" stroke-width="1.4"/><rect x="1335.6" y="303.7" width="13.4" height="13" fill="rgba(255,255,255,.06)" stroke="rgba(255,255,255,.92)" stroke-width="1.4"/><rect x="1200.8" y="284.0" width="13.4" height="13" fill="rgba(255,255,255,.06)" stroke="rgba(255,255,255,.92)" stroke-width="1.4"/><rect x="1200.8" y="333.8" width="13.4" height="13" fill="rgba(255,255,255,.06)" stroke="rgba(255,255,255,.92)" stroke-width="1.4"/><rect x="1197.6" y="445.9" width="13.4" height="13" fill="rgba(255,255,255,.06)" stroke="rgba(255,255,255,.92)" stroke-width="1.4"/><ellipse cx="1150.0" cy="120.4" rx="4.5" ry="4.1" fill="#00ff00" stroke="#000" stroke-width="1.1"/><ellipse cx="1173.4" cy="141.9" rx="4.5" ry="4.1" fill="#5f9a5f" stroke="#000" stroke-width="1.1"/><ellipse cx="1213.0" cy="135.4" rx="4.5" ry="4.1" fill="#a4b450" stroke="#000" stroke-width="1.1"/><ellipse cx="1234.4" cy="128.6" rx="4.5" ry="4.1" fill="#ffff00" stroke="#000" stroke-width="1.1"/><ellipse cx="1262.0" cy="132.6" rx="4.5" ry="4.1" fill="#e7c71f" stroke="#000" stroke-width="1.1"/><ellipse cx="1293.2" cy="138.1" rx="4.5" ry="4.1" fill="#e0a32e" stroke="#000" stroke-width="1.1"/><ellipse cx="1336.7" cy="142.1" rx="4.5" ry="4.1" fill="#d67e2c" stroke="#000" stroke-width="1.1"/><ellipse cx="1210.0" cy="157.0" rx="4.5" ry="4.1" fill="#5b6c47" stroke="#000" stroke-width="1.1"/><ellipse cx="1281.0" cy="170.5" rx="4.5" ry="4.1" fill="#735244" stroke="#000" stroke-width="1.1"/><ellipse cx="1266.0" cy="177.3" rx="4.5" ry="4.1" fill="#c29682" stroke="#000" stroke-width="1.1"/><ellipse cx="1281.0" cy="191.0" rx="4.5" ry="4.1" fill="#000000" stroke="#000" stroke-width="1.1"/><ellipse cx="1358.4" cy="184.4" rx="4.5" ry="4.1" fill="#c15a63" stroke="#000" stroke-width="1.1"/><ellipse cx="1180.0" cy="189.9" rx="4.5" ry="4.1" fill="#67bdaa" stroke="#000" stroke-width="1.1"/><ellipse cx="1164.0" cy="207.4" rx="4.5" ry="4.1" fill="#00ffff" stroke="#000" stroke-width="1.1"/><ellipse cx="1166.6" cy="240.0" rx="4.5" ry="4.1" fill="#0885a1" stroke="#000" stroke-width="1.1"/><ellipse cx="1202.0" cy="237.3" rx="4.5" ry="4.1" fill="#627a9d" stroke="#000" stroke-width="1.1"/><ellipse cx="1223.3" cy="242.7" rx="4.5" ry="4.1" fill="#8580b1" stroke="#000" stroke-width="1.1"/><ellipse cx="1324.3" cy="233.1" rx="4.5" ry="4.1" fill="#bb5695" stroke="#000" stroke-width="1.1"/><ellipse cx="1262.0" cy="264.2" rx="4.5" ry="4.1" fill="#5e3c6c" stroke="#000" stroke-width="1.1"/><ellipse cx="1502.6" cy="151.4" rx="4.5" ry="4.1" fill="#ff0000" stroke="#000" stroke-width="1.1"/><ellipse cx="1426.4" cy="170.4" rx="4.5" ry="4.1" fill="#af363c" stroke="#000" stroke-width="1.1"/><ellipse cx="1342.3" cy="310.8" rx="4.5" ry="4.1" fill="#ff00ff" stroke="#000" stroke-width="1.1"/><ellipse cx="1204.3" cy="294.3" rx="4.5" ry="4.1" fill="#505ba6" stroke="#000" stroke-width="1.1"/><ellipse cx="1202.9" cy="349.2" rx="4.5" ry="4.1" fill="#383d96" stroke="#000" stroke-width="1.1"/><ellipse cx="1199.5" cy="453.9" rx="4.5" ry="4.1" fill="#0000ff" stroke="#000" stroke-width="1.1"/><rect x="1221" y="191" width="12.6" height="12.6" fill="rgba(255,255,255,.25)" stroke="#000" stroke-width="2.2"/><ellipse cx="1227.3" cy="196.6" rx="4.4" ry="4.1" fill="#a0a0a0" stroke="#000" stroke-width="1.1"/></svg>
<div style="left:1453px;top:410px;width:198px;height:131px;border:1px solid #8c8c8c;background:linear-gradient(120.5deg,#b0ff00 0%,#ffff00 50%,#ffb000 100%)"></div>
<div style="left:1454px;top:411px;width:196px;height:129px;background:rgba(0,0,0,.4);clip-path:polygon(0 0,100% 0,100% 115px,0 13px)"></div>
<svg width="1664" height="945"><rect x="1544.5" y="467.5" width="13.5" height="13.5" fill="rgba(255,255,255,.13)" stroke="rgba(255,255,255,.88)" stroke-width="1.3"/><circle cx="1552" cy="469.5" r="3.6" fill="#ffff00" stroke="#000" stroke-width="1.1"/></svg>
<div style="left:1402px;top:551px;width:253px;height:27px;background:#2d2d2d"></div>
<div style="left:1403px;top:553.500px;font-size:19.6px;color:#f2f2f2;white-space:nowrap">RGB Triplet: 255, 255, 0</div>
<div style="left:0;top:625.500px;width:334px;text-align:center;font-size:28.6px;letter-spacing:.35px;line-height:1;color:#f2f2f2;white-space:nowrap">Avg dE2000: 0,91</div>
<div style="left:0;top:668.500px;width:334px;text-align:center;font-size:28px;line-height:1;color:#f2f2f2;white-space:nowrap;letter-spacing:.9px">Max dE2000: 1,95</div>
<div style="left:14px;top:715.5px;font-size:28px;color:#f2f2f2;white-space:nowrap;line-height:1;letter-spacing:.95px">Current Reading</div>
<div style="left:14px;top:753.5px;font-size:24px;color:#f2f2f2;white-space:nowrap;line-height:1;letter-spacing:.4px">x: 0,4195</div>
<div style="left:171px;top:753.5px;font-size:24px;color:#f2f2f2;white-space:nowrap;line-height:1;letter-spacing:.4px">y: 0,5071</div>
<div style="left:14px;top:794.5px;font-size:24px;color:#f2f2f2;white-space:nowrap;line-height:1;letter-spacing:.5px">fL: 146,74</div>
<div style="left:14px;top:828.5px;font-size:24px;color:#f2f2f2;white-space:nowrap;line-height:1;letter-spacing:1.05px">cd/m²: 502,76</div>
<div style="left:320px;top:632px;width:1344px;height:226px;overflow:hidden;background:#141414"><div style="left:2px;top:1.500px;width:1342px;height:28px;background:linear-gradient(#303030 0,#2b2b2b 41%,#191919 45%,#1e1e1e 100%)"></div><div style="left:2px;top:29.4px;width:1342px;height:26px;background:#424242"></div><div style="left:16.8px;top:34.9px;font-size:14px;font-weight:bold;color:#f4f4f4;white-space:nowrap;line-height:16px;transform:scaleX(1.300);transform-origin:0 0">x: CIE31</div><div style="left:2px;top:55.2px;width:1342px;height:26px;background:#7d7d7d"></div><div style="left:16.8px;top:60.7px;font-size:14px;font-weight:bold;color:#f4f4f4;white-space:nowrap;line-height:16px;transform:scaleX(1.300);transform-origin:0 0">y: CIE31</div><div style="left:2px;top:80.9px;width:1342px;height:26px;background:#424242"></div><div style="left:16.8px;top:86.4px;font-size:14px;font-weight:bold;color:#f4f4f4;white-space:nowrap;line-height:16px;transform:scaleX(1.300);transform-origin:0 0">Y</div><div style="left:2px;top:106.7px;width:1342px;height:26px;background:#7d7d7d"></div><div style="left:16.8px;top:112.2px;font-size:14px;font-weight:bold;color:#f4f4f4;white-space:nowrap;line-height:16px;transform:scaleX(1.300);transform-origin:0 0">Target x:CIE31</div><div style="left:2px;top:132.5px;width:1342px;height:26px;background:#424242"></div><div style="left:16.8px;top:138.0px;font-size:14px;font-weight:bold;color:#f4f4f4;white-space:nowrap;line-height:16px;transform:scaleX(1.300);transform-origin:0 0">Target y:CIE31</div><div style="left:2px;top:158.2px;width:1342px;height:26px;background:#7d7d7d"></div><div style="left:16.8px;top:163.8px;font-size:14px;font-weight:bold;color:#f4f4f4;white-space:nowrap;line-height:16px;transform:scaleX(1.300);transform-origin:0 0">Target Y</div><div style="left:2px;top:184.0px;width:1342px;height:26px;background:#424242"></div><div style="left:16.8px;top:189.5px;font-size:14px;font-weight:bold;color:#f4f4f4;white-space:nowrap;line-height:16px;transform:scaleX(1.300);transform-origin:0 0">ΔE 2000</div><div style="left:106.6px;top:8px;width:200px;text-align:center;font-size:14px;color:#f0f0f0;-webkit-text-stroke:.25px #f0f0f0;white-space:nowrap;line-height:16px;transform:scaleX(1.260)">White</div><div style="left:168.0px;top:34.9px;font-size:14px;color:#ececec;-webkit-text-stroke:.2px #ececec;white-space:nowrap;line-height:16px;transform:scaleX(1.317);transform-origin:0 0">0,3130</div><div style="left:168.0px;top:60.7px;font-size:14px;color:#ececec;-webkit-text-stroke:.2px #ececec;white-space:nowrap;line-height:16px;transform:scaleX(1.317);transform-origin:0 0">0,3316</div><div style="left:168.0px;top:86.4px;font-size:14px;color:#ececec;-webkit-text-stroke:.2px #ececec;white-space:nowrap;line-height:16px;transform:scaleX(1.317);transform-origin:0 0">537,8885</div><div style="left:168.0px;top:112.2px;font-size:14px;color:#ececec;-webkit-text-stroke:.2px #ececec;white-space:nowrap;line-height:16px;transform:scaleX(1.317);transform-origin:0 0">0,3127</div><div style="left:168.0px;top:138.0px;font-size:14px;color:#ececec;-webkit-text-stroke:.2px #ececec;white-space:nowrap;line-height:16px;transform:scaleX(1.317);transform-origin:0 0">0,3290</div><div style="left:168.0px;top:163.8px;font-size:14px;color:#ececec;-webkit-text-stroke:.2px #ececec;white-space:nowrap;line-height:16px;transform:scaleX(1.317);transform-origin:0 0">537,8885</div><div style="left:168.0px;top:189.5px;font-size:14px;color:#ececec;-webkit-text-stroke:.2px #ececec;white-space:nowrap;line-height:16px;transform:scaleX(1.317);transform-origin:0 0">1,9530</div><div style="left:194.6px;top:8px;width:200px;text-align:center;font-size:14px;color:#f0f0f0;-webkit-text-stroke:.25px #f0f0f0;white-space:nowrap;line-height:16px;transform:scaleX(1.260)">Gray 80</div><div style="left:255.6px;top:34.9px;font-size:14px;color:#ececec;-webkit-text-stroke:.2px #ececec;white-space:nowrap;line-height:16px;transform:scaleX(1.317);transform-origin:0 0">0,3128</div><div style="left:255.6px;top:60.7px;font-size:14px;color:#ececec;-webkit-text-stroke:.2px #ececec;white-space:nowrap;line-height:16px;transform:scaleX(1.317);transform-origin:0 0">0,3312</div><div style="left:255.6px;top:86.4px;font-size:14px;color:#ececec;-webkit-text-stroke:.2px #ececec;white-space:nowrap;line-height:16px;transform:scaleX(1.317);transform-origin:0 0">429,1613</div><div style="left:255.6px;top:112.2px;font-size:14px;color:#ececec;-webkit-text-stroke:.2px #ececec;white-space:nowrap;line-height:16px;transform:scaleX(1.317);transform-origin:0 0">0,3127</div><div style="left:255.6px;top:138.0px;font-size:14px;color:#ececec;-webkit-text-stroke:.2px #ececec;white-space:nowrap;line-height:16px;transform:scaleX(1.317);transform-origin:0 0">0,3290</div><div style="left:255.6px;top:163.8px;font-size:14px;color:#ececec;-webkit-text-stroke:.2px #ececec;white-space:nowrap;line-height:16px;transform:scaleX(1.317);transform-origin:0 0">425,6300</div><div style="left:255.6px;top:189.5px;font-size:14px;color:#ececec;-webkit-text-stroke:.2px #ececec;white-space:nowrap;line-height:16px;transform:scaleX(1.317);transform-origin:0 0">1,5956</div><div style="left:282.5px;top:8px;width:200px;text-align:center;font-size:14px;color:#f0f0f0;-webkit-text-stroke:.25px #f0f0f0;white-space:nowrap;line-height:16px;transform:scaleX(1.260)">Gray 65</div><div style="left:343.4px;top:34.9px;font-size:14px;color:#ececec;-webkit-text-stroke:.2px #ececec;white-space:nowrap;line-height:16px;transform:scaleX(1.317);transform-origin:0 0">0,3127</div><div style="left:343.4px;top:60.7px;font-size:14px;color:#ececec;-webkit-text-stroke:.2px #ececec;white-space:nowrap;line-height:16px;transform:scaleX(1.317);transform-origin:0 0">0,3310</div><div style="left:343.4px;top:86.4px;font-size:14px;color:#ececec;-webkit-text-stroke:.2px #ececec;white-space:nowrap;line-height:16px;transform:scaleX(1.317);transform-origin:0 0">346,2352</div><div style="left:343.4px;top:112.2px;font-size:14px;color:#ececec;-webkit-text-stroke:.2px #ececec;white-space:nowrap;line-height:16px;transform:scaleX(1.317);transform-origin:0 0">0,3127</div><div style="left:343.4px;top:138.0px;font-size:14px;color:#ececec;-webkit-text-stroke:.2px #ececec;white-space:nowrap;line-height:16px;transform:scaleX(1.317);transform-origin:0 0">0,3290</div><div style="left:343.4px;top:163.8px;font-size:14px;color:#ececec;-webkit-text-stroke:.2px #ececec;white-space:nowrap;line-height:16px;transform:scaleX(1.317);transform-origin:0 0">342,9560</div><div style="left:343.4px;top:189.5px;font-size:14px;color:#ececec;-webkit-text-stroke:.2px #ececec;white-space:nowrap;line-height:16px;transform:scaleX(1.317);transform-origin:0 0">1,3933</div><div style="left:370.8px;top:8px;width:200px;text-align:center;font-size:14px;color:#f0f0f0;-webkit-text-stroke:.25px #f0f0f0;white-space:nowrap;line-height:16px;transform:scaleX(1.260)">Gray 50</div><div style="left:431.6px;top:34.9px;font-size:14px;color:#ececec;-webkit-text-stroke:.2px #ececec;white-space:nowrap;line-height:16px;transform:scaleX(1.317);transform-origin:0 0">0,3125</div><div style="left:431.6px;top:60.7px;font-size:14px;color:#ececec;-webkit-text-stroke:.2px #ececec;white-space:nowrap;line-height:16px;transform:scaleX(1.317);transform-origin:0 0">0,3306</div><div style="left:431.6px;top:86.4px;font-size:14px;color:#ececec;-webkit-text-stroke:.2px #ececec;white-space:nowrap;line-height:16px;transform:scaleX(1.317);transform-origin:0 0">266,7789</div><div style="left:431.6px;top:112.2px;font-size:14px;color:#ececec;-webkit-text-stroke:.2px #ececec;white-space:nowrap;line-height:16px;transform:scaleX(1.317);transform-origin:0 0">0,3127</div><div style="left:431.6px;top:138.0px;font-size:14px;color:#ececec;-webkit-text-stroke:.2px #ececec;white-space:nowrap;line-height:16px;transform:scaleX(1.317);transform-origin:0 0">0,3290</div><div style="left:431.6px;top:163.8px;font-size:14px;color:#ececec;-webkit-text-stroke:.2px #ececec;white-space:nowrap;line-height:16px;transform:scaleX(1.317);transform-origin:0 0">264,1145</div><div style="left:431.6px;top:189.5px;font-size:14px;color:#ececec;-webkit-text-stroke:.2px #ececec;white-space:nowrap;line-height:16px;transform:scaleX(1.317);transform-origin:0 0">1,1871</div><div style="left:458.6px;top:8px;width:200px;text-align:center;font-size:14px;color:#f0f0f0;-webkit-text-stroke:.25px #f0f0f0;white-space:nowrap;line-height:16px;transform:scaleX(1.260)">Gray 35</div><div style="left:519.6px;top:34.9px;font-size:14px;color:#ececec;-webkit-text-stroke:.2px #ececec;white-space:nowrap;line-height:16px;transform:scaleX(1.317);transform-origin:0 0">0,3125</div><div style="left:519.6px;top:60.7px;font-size:14px;color:#ececec;-webkit-text-stroke:.2px #ececec;white-space:nowrap;line-height:16px;transform:scaleX(1.317);transform-origin:0 0">0,3308</div><div style="left:519.6px;top:86.4px;font-size:14px;color:#ececec;-webkit-text-stroke:.2px #ececec;white-space:nowrap;line-height:16px;transform:scaleX(1.317);transform-origin:0 0">184,7612</div><div style="left:519.6px;top:112.2px;font-size:14px;color:#ececec;-webkit-text-stroke:.2px #ececec;white-space:nowrap;line-height:16px;transform:scaleX(1.317);transform-origin:0 0">0,3127</div><div style="left:519.6px;top:138.0px;font-size:14px;color:#ececec;-webkit-text-stroke:.2px #ececec;white-space:nowrap;line-height:16px;transform:scaleX(1.317);transform-origin:0 0">0,3290</div><div style="left:519.6px;top:163.8px;font-size:14px;color:#ececec;-webkit-text-stroke:.2px #ececec;white-space:nowrap;line-height:16px;transform:scaleX(1.317);transform-origin:0 0">183,9118</div><div style="left:519.6px;top:189.5px;font-size:14px;color:#ececec;-webkit-text-stroke:.2px #ececec;white-space:nowrap;line-height:16px;transform:scaleX(1.317);transform-origin:0 0">1,1203</div><div style="left:536.3px;top:8px;width:200px;text-align:center;font-size:14px;color:#f0f0f0;-webkit-text-stroke:.25px #f0f0f0;white-space:nowrap;line-height:16px;transform:scaleX(1.260)">Black</div><div style="left:607.6px;top:34.9px;font-size:14px;color:#ececec;-webkit-text-stroke:.2px #ececec;white-space:nowrap;line-height:16px;transform:scaleX(1.317);transform-origin:0 0">0,3789</div><div style="left:607.6px;top:60.7px;font-size:14px;color:#ececec;-webkit-text-stroke:.2px #ececec;white-space:nowrap;line-height:16px;transform:scaleX(1.317);transform-origin:0 0">0,3253</div><div style="left:607.6px;top:86.4px;font-size:14px;color:#ececec;-webkit-text-stroke:.2px #ececec;white-space:nowrap;line-height:16px;transform:scaleX(1.317);transform-origin:0 0">0,0422</div><div style="left:607.6px;top:112.2px;font-size:14px;color:#ececec;-webkit-text-stroke:.2px #ececec;white-space:nowrap;line-height:16px;transform:scaleX(1.317);transform-origin:0 0">0,3127</div><div style="left:607.6px;top:138.0px;font-size:14px;color:#ececec;-webkit-text-stroke:.2px #ececec;white-space:nowrap;line-height:16px;transform:scaleX(1.317);transform-origin:0 0">0,3290</div><div style="left:607.6px;top:163.8px;font-size:14px;color:#ececec;-webkit-text-stroke:.2px #ececec;white-space:nowrap;line-height:16px;transform:scaleX(1.317);transform-origin:0 0">0,0000</div><div style="left:607.6px;top:189.5px;font-size:14px;color:#ececec;-webkit-text-stroke:.2px #ececec;white-space:nowrap;line-height:16px;transform:scaleX(1.317);transform-origin:0 0">0,1126</div><div style="left:611.6px;top:8px;width:200px;text-align:center;font-size:14px;color:#f0f0f0;-webkit-text-stroke:.25px #f0f0f0;white-space:nowrap;line-height:16px;transform:scaleX(1.260)">Dark Skin</div><div style="left:674.8px;top:34.9px;font-size:14px;color:#ececec;-webkit-text-stroke:.2px #ececec;white-space:nowrap;line-height:16px;transform:scaleX(1.317);transform-origin:0 0">0,4063</div><div style="left:674.8px;top:60.7px;font-size:14px;color:#ececec;-webkit-text-stroke:.2px #ececec;white-space:nowrap;line-height:16px;transform:scaleX(1.317);transform-origin:0 0">0,3670</div><div style="left:674.8px;top:86.4px;font-size:14px;color:#ececec;-webkit-text-stroke:.2px #ececec;white-space:nowrap;line-height:16px;transform:scaleX(1.317);transform-origin:0 0">52,0262</div><div style="left:674.8px;top:112.2px;font-size:14px;color:#ececec;-webkit-text-stroke:.2px #ececec;white-space:nowrap;line-height:16px;transform:scaleX(1.317);transform-origin:0 0">0,4003</div><div style="left:674.8px;top:138.0px;font-size:14px;color:#ececec;-webkit-text-stroke:.2px #ececec;white-space:nowrap;line-height:16px;transform:scaleX(1.317);transform-origin:0 0">0,3642</div><div style="left:674.8px;top:163.8px;font-size:14px;color:#ececec;-webkit-text-stroke:.2px #ececec;white-space:nowrap;line-height:16px;transform:scaleX(1.317);transform-origin:0 0">54,1831</div><div style="left:674.8px;top:189.5px;font-size:14px;color:#ececec;-webkit-text-stroke:.2px #ececec;white-space:nowrap;line-height:16px;transform:scaleX(1.317);transform-origin:0 0">0,8628</div><div style="left:697.7px;top:8px;width:200px;text-align:center;font-size:14px;color:#f0f0f0;-webkit-text-stroke:.25px #f0f0f0;white-space:nowrap;line-height:16px;transform:scaleX(1.260)">Light Skin</div><div style="left:758.6px;top:34.9px;font-size:14px;color:#ececec;-webkit-text-stroke:.2px #ececec;white-space:nowrap;line-height:16px;transform:scaleX(1.317);transform-origin:0 0">0,3801</div><div style="left:758.6px;top:60.7px;font-size:14px;color:#ececec;-webkit-text-stroke:.2px #ececec;white-space:nowrap;line-height:16px;transform:scaleX(1.317);transform-origin:0 0">0,3576</div><div style="left:758.6px;top:86.4px;font-size:14px;color:#ececec;-webkit-text-stroke:.2px #ececec;white-space:nowrap;line-height:16px;transform:scaleX(1.317);transform-origin:0 0">189,0990</div><div style="left:758.6px;top:112.2px;font-size:14px;color:#ececec;-webkit-text-stroke:.2px #ececec;white-space:nowrap;line-height:16px;transform:scaleX(1.317);transform-origin:0 0">0,3795</div><div style="left:758.6px;top:138.0px;font-size:14px;color:#ececec;-webkit-text-stroke:.2px #ececec;white-space:nowrap;line-height:16px;transform:scaleX(1.317);transform-origin:0 0">0,3562</div><div style="left:758.6px;top:163.8px;font-size:14px;color:#ececec;-webkit-text-stroke:.2px #ececec;white-space:nowrap;line-height:16px;transform:scaleX(1.317);transform-origin:0 0">187,6971</div><div style="left:758.6px;top:189.5px;font-size:14px;color:#ececec;-webkit-text-stroke:.2px #ececec;white-space:nowrap;line-height:16px;transform:scaleX(1.317);transform-origin:0 0">0,5181</div><div style="left:786.0px;top:8px;width:200px;text-align:center;font-size:14px;color:#f0f0f0;-webkit-text-stroke:.25px #f0f0f0;white-space:nowrap;line-height:16px;transform:scaleX(1.260)">Blue Sky</div><div style="left:847.0px;top:34.9px;font-size:14px;color:#ececec;-webkit-text-stroke:.2px #ececec;white-space:nowrap;line-height:16px;transform:scaleX(1.317);transform-origin:0 0">0,2467</div><div style="left:847.0px;top:60.7px;font-size:14px;color:#ececec;-webkit-text-stroke:.2px #ececec;white-space:nowrap;line-height:16px;transform:scaleX(1.317);transform-origin:0 0">0,2664</div><div style="left:847.0px;top:86.4px;font-size:14px;color:#ececec;-webkit-text-stroke:.2px #ececec;white-space:nowrap;line-height:16px;transform:scaleX(1.317);transform-origin:0 0">99,5045</div><div style="left:847.0px;top:112.2px;font-size:14px;color:#ececec;-webkit-text-stroke:.2px #ececec;white-space:nowrap;line-height:16px;transform:scaleX(1.317);transform-origin:0 0">0,2496</div><div style="left:847.0px;top:138.0px;font-size:14px;color:#ececec;-webkit-text-stroke:.2px #ececec;white-space:nowrap;line-height:16px;transform:scaleX(1.317);transform-origin:0 0">0,2656</div><div style="left:847.0px;top:163.8px;font-size:14px;color:#ececec;-webkit-text-stroke:.2px #ececec;white-space:nowrap;line-height:16px;transform:scaleX(1.317);transform-origin:0 0">100,5765</div><div style="left:847.0px;top:189.5px;font-size:14px;color:#ececec;-webkit-text-stroke:.2px #ececec;white-space:nowrap;line-height:16px;transform:scaleX(1.317);transform-origin:0 0">1,4059</div><div style="left:868.5px;top:8px;width:200px;text-align:center;font-size:14px;color:#f0f0f0;-webkit-text-stroke:.25px #f0f0f0;white-space:nowrap;line-height:16px;transform:scaleX(1.260)">Foliage</div><div style="left:934.6px;top:34.9px;font-size:14px;color:#ececec;-webkit-text-stroke:.2px #ececec;white-space:nowrap;line-height:16px;transform:scaleX(1.317);transform-origin:0 0">0,3407</div><div style="left:934.6px;top:60.7px;font-size:14px;color:#ececec;-webkit-text-stroke:.2px #ececec;white-space:nowrap;line-height:16px;transform:scaleX(1.317);transform-origin:0 0">0,4333</div><div style="left:934.6px;top:86.4px;font-size:14px;color:#ececec;-webkit-text-stroke:.2px #ececec;white-space:nowrap;line-height:16px;transform:scaleX(1.317);transform-origin:0 0">68,1135</div><div style="left:934.6px;top:112.2px;font-size:14px;color:#ececec;-webkit-text-stroke:.2px #ececec;white-space:nowrap;line-height:16px;transform:scaleX(1.317);transform-origin:0 0">0,3395</div><div style="left:934.6px;top:138.0px;font-size:14px;color:#ececec;-webkit-text-stroke:.2px #ececec;white-space:nowrap;line-height:16px;transform:scaleX(1.317);transform-origin:0 0">0,4271</div><div style="left:934.6px;top:163.8px;font-size:14px;color:#ececec;-webkit-text-stroke:.2px #ececec;white-space:nowrap;line-height:16px;transform:scaleX(1.317);transform-origin:0 0">70,1001</div><div style="left:934.6px;top:189.5px;font-size:14px;color:#ececec;-webkit-text-stroke:.2px #ececec;white-space:nowrap;line-height:16px;transform:scaleX(1.317);transform-origin:0 0">0,7797</div><div style="left:958.9px;top:8px;width:200px;text-align:center;font-size:14px;color:#f0f0f0;-webkit-text-stroke:.25px #f0f0f0;white-space:nowrap;line-height:16px;transform:scaleX(1.260)">Blue Flower</div><div style="left:1012.2px;top:34.9px;font-size:14px;color:#ececec;-webkit-text-stroke:.2px #ececec;white-space:nowrap;line-height:16px;transform:scaleX(1.317);transform-origin:0 0">0,2669</div><div style="left:1012.2px;top:60.7px;font-size:14px;color:#ececec;-webkit-text-stroke:.2px #ececec;white-space:nowrap;line-height:16px;transform:scaleX(1.317);transform-origin:0 0">0,2534</div><div style="left:1012.2px;top:86.4px;font-size:14px;color:#ececec;-webkit-text-stroke:.2px #ececec;white-space:nowrap;line-height:16px;transform:scaleX(1.317);transform-origin:0 0">125,2795</div><div style="left:1012.2px;top:112.2px;font-size:14px;color:#ececec;-webkit-text-stroke:.2px #ececec;white-space:nowrap;line-height:16px;transform:scaleX(1.317);transform-origin:0 0">0,2681</div><div style="left:1012.2px;top:138.0px;font-size:14px;color:#ececec;-webkit-text-stroke:.2px #ececec;white-space:nowrap;line-height:16px;transform:scaleX(1.317);transform-origin:0 0">0,2525</div><div style="left:1012.2px;top:163.8px;font-size:14px;color:#ececec;-webkit-text-stroke:.2px #ececec;white-space:nowrap;line-height:16px;transform:scaleX(1.317);transform-origin:0 0">125,4274</div><div style="left:1012.2px;top:189.5px;font-size:14px;color:#ececec;-webkit-text-stroke:.2px #ececec;white-space:nowrap;line-height:16px;transform:scaleX(1.317);transform-origin:0 0">0,6277</div><div style="left:1066.2px;top:8px;width:200px;text-align:center;font-size:14px;color:#f0f0f0;-webkit-text-stroke:.25px #f0f0f0;white-space:nowrap;line-height:16px;transform:scaleX(1.260)">Bluish Green</div><div style="left:1115.4px;top:34.9px;font-size:14px;color:#ececec;-webkit-text-stroke:.2px #ececec;white-space:nowrap;line-height:16px;transform:scaleX(1.317);transform-origin:0 0">0,2614</div><div style="left:1115.4px;top:60.7px;font-size:14px;color:#ececec;-webkit-text-stroke:.2px #ececec;white-space:nowrap;line-height:16px;transform:scaleX(1.317);transform-origin:0 0">0,3636</div><div style="left:1115.4px;top:86.4px;font-size:14px;color:#ececec;-webkit-text-stroke:.2px #ececec;white-space:nowrap;line-height:16px;transform:scaleX(1.317);transform-origin:0 0">226,5550</div><div style="left:1115.4px;top:112.2px;font-size:14px;color:#ececec;-webkit-text-stroke:.2px #ececec;white-space:nowrap;line-height:16px;transform:scaleX(1.317);transform-origin:0 0">0,2626</div><div style="left:1115.4px;top:138.0px;font-size:14px;color:#ececec;-webkit-text-stroke:.2px #ececec;white-space:nowrap;line-height:16px;transform:scaleX(1.317);transform-origin:0 0">0,3616</div><div style="left:1115.4px;top:163.8px;font-size:14px;color:#ececec;-webkit-text-stroke:.2px #ececec;white-space:nowrap;line-height:16px;transform:scaleX(1.317);transform-origin:0 0">225,2301</div><div style="left:1115.4px;top:189.5px;font-size:14px;color:#ececec;-webkit-text-stroke:.2px #ececec;white-space:nowrap;line-height:16px;transform:scaleX(1.317);transform-origin:0 0">0,5479</div><div style="left:1165.4px;top:8px;width:200px;text-align:center;font-size:14px;color:#f0f0f0;-webkit-text-stroke:.25px #f0f0f0;white-space:nowrap;line-height:16px;transform:scaleX(1.260)">Orange</div><div style="left:1227.2px;top:34.9px;font-size:14px;color:#ececec;-webkit-text-stroke:.2px #ececec;white-space:nowrap;line-height:16px;transform:scaleX(1.317);transform-origin:0 0">0,5162</div><div style="left:1227.2px;top:60.7px;font-size:14px;color:#ececec;-webkit-text-stroke:.2px #ececec;white-space:nowrap;line-height:16px;transform:scaleX(1.317);transform-origin:0 0">0,4102</div><div style="left:1227.2px;top:86.4px;font-size:14px;color:#ececec;-webkit-text-stroke:.2px #ececec;white-space:nowrap;line-height:16px;transform:scaleX(1.317);transform-origin:0 0">153,2632</div><div style="left:1227.2px;top:112.2px;font-size:14px;color:#ececec;-webkit-text-stroke:.2px #ececec;white-space:nowrap;line-height:16px;transform:scaleX(1.317);transform-origin:0 0">0,5122</div><div style="left:1227.2px;top:138.0px;font-size:14px;color:#ececec;-webkit-text-stroke:.2px #ececec;white-space:nowrap;line-height:16px;transform:scaleX(1.317);transform-origin:0 0">0,4063</div><div style="left:1227.2px;top:163.8px;font-size:14px;color:#ececec;-webkit-text-stroke:.2px #ececec;white-space:nowrap;line-height:16px;transform:scaleX(1.317);transform-origin:0 0">152,4797</div><div style="left:1227.2px;top:189.5px;font-size:14px;color:#ececec;-webkit-text-stroke:.2px #ececec;white-space:nowrap;line-height:16px;transform:scaleX(1.317);transform-origin:0 0">1,1204</div><div style="left:1266.7px;top:8px;width:200px;text-align:center;font-size:14px;color:#f0f0f0;-webkit-text-stroke:.25px #f0f0f0;white-space:nowrap;line-height:16px;transform:scaleX(1.260)">Purplish Blue</div><div style="left:1314.7px;top:34.9px;font-size:14px;color:#ececec;-webkit-text-stroke:.2px #ececec;white-space:nowrap;line-height:16px;transform:scaleX(1.317);transform-origin:0 0">0,2116</div><div style="left:1314.7px;top:60.7px;font-size:14px;color:#ececec;-webkit-text-stroke:.2px #ececec;white-space:nowrap;line-height:16px;transform:scaleX(1.317);transform-origin:0 0">0,1832</div><div style="left:1314.7px;top:86.4px;font-size:14px;color:#ececec;-webkit-text-stroke:.2px #ececec;white-space:nowrap;line-height:16px;transform:scaleX(1.317);transform-origin:0 0">60,6479</div><div style="left:1314.7px;top:112.2px;font-size:14px;color:#ececec;-webkit-text-stroke:.2px #ececec;white-space:nowrap;line-height:16px;transform:scaleX(1.317);transform-origin:0 0">0,2138</div><div style="left:1314.7px;top:138.0px;font-size:14px;color:#ececec;-webkit-text-stroke:.2px #ececec;white-space:nowrap;line-height:16px;transform:scaleX(1.317);transform-origin:0 0">0,1904</div><div style="left:1314.7px;top:163.8px;font-size:14px;color:#ececec;-webkit-text-stroke:.2px #ececec;white-space:nowrap;line-height:16px;transform:scaleX(1.317);transform-origin:0 0">63,2081</div><div style="left:1314.7px;top:189.5px;font-size:14px;color:#ececec;-webkit-text-stroke:.2px #ececec;white-space:nowrap;line-height:16px;transform:scaleX(1.317);transform-origin:0 0">1,0631</div></div>
<div style="left:322px;top:842px;width:1342px;height:15px;background:#636363"></div><div style="left:342px;top:843px;width:583px;height:13px;background:#434343;border-radius:6px"></div><div style="left:323px;top:843px;width:14px;height:13px;background:#8a8a8a;border:1px solid #aaa;border-radius:2px"></div><div style="left:1649px;top:843px;width:14px;height:13px;background:#8a8a8a;border:1px solid #aaa;border-radius:2px"></div><svg width="1664" height="945"><path d="M333 845.5 v8 l-6 -4 z" fill="#222"/><path d="M1653 845.5 v8 l6 -4 z" fill="#222"/></svg>
<div style="left:0;top:868px;width:1265px;height:77px;overflow:hidden"><div style="left:1px;top:3px;width:62px;height:60.5px;background:linear-gradient(#9b9b9b,#7c7c7c 50%,#5f5f5f);border-top:1px solid #a6a6a6;border-radius:5px"></div><div style="left:6px;top:9px;width:51px;height:30px;background:#ffffff;border-radius:4px;box-shadow:inset 0 1px 2px rgba(0,0,0,.45),0 0 0 1px rgba(255,255,255,.18)"></div><div style="left:-9px;top:47px;width:82px;text-align:center;font-size:12.6px;line-height:15px;font-weight:bold;color:#2a2a2a;white-space:nowrap"><span style="display:inline-block;text-align:left">White</span></div><div style="left:66px;top:3px;width:62px;height:60.5px;background:linear-gradient(#9b9b9b,#7c7c7c 50%,#5f5f5f);border-top:1px solid #a6a6a6;border-radius:5px"></div><div style="left:71px;top:9px;width:51px;height:30px;background:#e6e6e6;border-radius:4px;box-shadow:inset 0 1px 2px rgba(0,0,0,.45),0 0 0 1px rgba(255,255,255,.18)"></div><div style="left:56px;top:47px;width:82px;text-align:center;font-size:12.6px;line-height:15px;font-weight:bold;color:#2a2a2a;white-space:nowrap"><span style="display:inline-block;text-align:left">Gray 80</span></div><div style="left:131px;top:3px;width:62px;height:60.5px;background:linear-gradient(#9b9b9b,#7c7c7c 50%,#5f5f5f);border-top:1px solid #a6a6a6;border-radius:5px"></div><div style="left:136px;top:9px;width:51px;height:30px;background:#d1d1d1;border-radius:4px;box-shadow:inset 0 1px 2px rgba(0,0,0,.45),0 0 0 1px rgba(255,255,255,.18)"></div><div style="left:121px;top:47px;width:82px;text-align:center;font-size:12.6px;line-height:15px;font-weight:bold;color:#2a2a2a;white-space:nowrap"><span style="display:inline-block;text-align:left">Gray 65</span></div><div style="left:196px;top:3px;width:62px;height:60.5px;background:linear-gradient(#9b9b9b,#7c7c7c 50%,#5f5f5f);border-top:1px solid #a6a6a6;border-radius:5px"></div><div style="left:201px;top:9px;width:51px;height:30px;background:#b9b9b9;border-radius:4px;box-shadow:inset 0 1px 2px rgba(0,0,0,.45),0 0 0 1px rgba(255,255,255,.18)"></div><div style="left:186px;top:47px;width:82px;text-align:center;font-size:12.6px;line-height:15px;font-weight:bold;color:#2a2a2a;white-space:nowrap"><span style="display:inline-block;text-align:left">Gray 50</span></div><div style="left:261px;top:3px;width:62px;height:60.5px;background:linear-gradient(#9b9b9b,#7c7c7c 50%,#5f5f5f);border-top:1px solid #a6a6a6;border-radius:5px"></div><div style="left:266px;top:9px;width:51px;height:30px;background:#9d9d9d;border-radius:4px;box-shadow:inset 0 1px 2px rgba(0,0,0,.45),0 0 0 1px rgba(255,255,255,.18)"></div><div style="left:251px;top:47px;width:82px;text-align:center;font-size:12.6px;line-height:15px;font-weight:bold;color:#2a2a2a;white-space:nowrap"><span style="display:inline-block;text-align:left">Gray 35</span></div><div style="left:326px;top:3px;width:62px;height:60.5px;background:linear-gradient(#9b9b9b,#7c7c7c 50%,#5f5f5f);border-top:1px solid #a6a6a6;border-radius:5px"></div><div style="left:331px;top:9px;width:51px;height:30px;background:#000000;border-radius:4px;box-shadow:inset 0 1px 2px rgba(0,0,0,.45),0 0 0 1px rgba(255,255,255,.18)"></div><div style="left:316px;top:47px;width:82px;text-align:center;font-size:12.6px;line-height:15px;font-weight:bold;color:#2a2a2a;white-space:nowrap"><span style="display:inline-block;text-align:left">Black</span></div><div style="left:391px;top:3px;width:62px;height:60.5px;background:linear-gradient(#9b9b9b,#7c7c7c 50%,#5f5f5f);border-top:1px solid #a6a6a6;border-radius:5px"></div><div style="left:396px;top:9px;width:51px;height:30px;background:#735244;border-radius:4px;box-shadow:inset 0 1px 2px rgba(0,0,0,.45),0 0 0 1px rgba(255,255,255,.18)"></div><div style="left:381px;top:47px;width:82px;text-align:center;font-size:12.6px;line-height:15px;font-weight:bold;color:#2a2a2a;white-space:nowrap"><span style="display:inline-block;text-align:left">Dark Skin</span></div><div style="left:456px;top:3px;width:62px;height:60.5px;background:linear-gradient(#9b9b9b,#7c7c7c 50%,#5f5f5f);border-top:1px solid #a6a6a6;border-radius:5px"></div><div style="left:461px;top:9px;width:51px;height:30px;background:#c29682;border-radius:4px;box-shadow:inset 0 1px 2px rgba(0,0,0,.45),0 0 0 1px rgba(255,255,255,.18)"></div><div style="left:446px;top:47px;width:82px;text-align:center;font-size:12.6px;line-height:15px;font-weight:bold;color:#2a2a2a;white-space:nowrap"><span style="display:inline-block;text-align:left">Light Skin</span></div><div style="left:521px;top:3px;width:62px;height:60.5px;background:linear-gradient(#9b9b9b,#7c7c7c 50%,#5f5f5f);border-top:1px solid #a6a6a6;border-radius:5px"></div><div style="left:526px;top:9px;width:51px;height:30px;background:#627a9d;border-radius:4px;box-shadow:inset 0 1px 2px rgba(0,0,0,.45),0 0 0 1px rgba(255,255,255,.18)"></div><div style="left:511px;top:47px;width:82px;text-align:center;font-size:12.6px;line-height:15px;font-weight:bold;color:#2a2a2a;white-space:nowrap"><span style="display:inline-block;text-align:left">Blue Sky</span></div><div style="left:586px;top:3px;width:62px;height:60.5px;background:linear-gradient(#9b9b9b,#7c7c7c 50%,#5f5f5f);border-top:1px solid #a6a6a6;border-radius:5px"></div><div style="left:591px;top:9px;width:51px;height:30px;background:#576c43;border-radius:4px;box-shadow:inset 0 1px 2px rgba(0,0,0,.45),0 0 0 1px rgba(255,255,255,.18)"></div><div style="left:576px;top:47px;width:82px;text-align:center;font-size:12.6px;line-height:15px;font-weight:bold;color:#2a2a2a;white-space:nowrap"><span style="display:inline-block;text-align:left">Foliage</span></div><div style="left:651px;top:3px;width:62px;height:60.5px;background:linear-gradient(#9b9b9b,#7c7c7c 50%,#5f5f5f);border-top:1px solid #a6a6a6;border-radius:5px"></div><div style="left:656px;top:9px;width:51px;height:15px;background:#8580b1;border-radius:4px;box-shadow:inset 0 1px 2px rgba(0,0,0,.45),0 0 0 1px rgba(255,255,255,.18)"></div><div style="left:641px;top:32px;width:82px;text-align:center;font-size:12.6px;line-height:15px;font-weight:bold;color:#2a2a2a;white-space:nowrap"><span style="display:inline-block;text-align:left">Blue<br>Flower</span></div><div style="left:716px;top:3px;width:62px;height:60.5px;background:linear-gradient(#9b9b9b,#7c7c7c 50%,#5f5f5f);border-top:1px solid #a6a6a6;border-radius:5px"></div><div style="left:721px;top:9px;width:51px;height:15px;background:#67bdaa;border-radius:4px;box-shadow:inset 0 1px 2px rgba(0,0,0,.45),0 0 0 1px rgba(255,255,255,.18)"></div><div style="left:706px;top:32px;width:82px;text-align:center;font-size:12.6px;line-height:15px;font-weight:bold;color:#2a2a2a;white-space:nowrap"><span style="display:inline-block;text-align:left">Bluish<br>Green</span></div><div style="left:781px;top:3px;width:62px;height:60.5px;background:linear-gradient(#9b9b9b,#7c7c7c 50%,#5f5f5f);border-top:1px solid #a6a6a6;border-radius:5px"></div><div style="left:786px;top:9px;width:51px;height:30px;background:#d67e2c;border-radius:4px;box-shadow:inset 0 1px 2px rgba(0,0,0,.45),0 0 0 1px rgba(255,255,255,.18)"></div><div style="left:771px;top:47px;width:82px;text-align:center;font-size:12.6px;line-height:15px;font-weight:bold;color:#2a2a2a;white-space:nowrap"><span style="display:inline-block;text-align:left">Orange</span></div><div style="left:846px;top:3px;width:62px;height:60.5px;background:linear-gradient(#9b9b9b,#7c7c7c 50%,#5f5f5f);border-top:1px solid #a6a6a6;border-radius:5px"></div><div style="left:851px;top:9px;width:51px;height:15px;background:#505ba6;border-radius:4px;box-shadow:inset 0 1px 2px rgba(0,0,0,.45),0 0 0 1px rgba(255,255,255,.18)"></div><div style="left:836px;top:32px;width:82px;text-align:center;font-size:12.6px;line-height:15px;font-weight:bold;color:#2a2a2a;white-space:nowrap"><span style="display:inline-block;text-align:left">Purplish<br>Blue</span></div><div style="left:911px;top:3px;width:62px;height:60.5px;background:linear-gradient(#9b9b9b,#7c7c7c 50%,#5f5f5f);border-top:1px solid #a6a6a6;border-radius:5px"></div><div style="left:916px;top:9px;width:51px;height:15px;background:#c15a63;border-radius:4px;box-shadow:inset 0 1px 2px rgba(0,0,0,.45),0 0 0 1px rgba(255,255,255,.18)"></div><div style="left:901px;top:32px;width:82px;text-align:center;font-size:12.6px;line-height:15px;font-weight:bold;color:#2a2a2a;white-space:nowrap"><span style="display:inline-block;text-align:left">Moderate<br>Red</span></div><div style="left:976px;top:3px;width:62px;height:60.5px;background:linear-gradient(#9b9b9b,#7c7c7c 50%,#5f5f5f);border-top:1px solid #a6a6a6;border-radius:5px"></div><div style="left:981px;top:9px;width:51px;height:30px;background:#5e3c6c;border-radius:4px;box-shadow:inset 0 1px 2px rgba(0,0,0,.45),0 0 0 1px rgba(255,255,255,.18)"></div><div style="left:966px;top:47px;width:82px;text-align:center;font-size:12.6px;line-height:15px;font-weight:bold;color:#2a2a2a;white-space:nowrap"><span style="display:inline-block;text-align:left">Purple</span></div><div style="left:1041px;top:3px;width:62px;height:60.5px;background:linear-gradient(#9b9b9b,#7c7c7c 50%,#5f5f5f);border-top:1px solid #a6a6a6;border-radius:5px"></div><div style="left:1046px;top:9px;width:51px;height:15px;background:#9dbc40;border-radius:4px;box-shadow:inset 0 1px 2px rgba(0,0,0,.45),0 0 0 1px rgba(255,255,255,.18)"></div><div style="left:1031px;top:32px;width:82px;text-align:center;font-size:12.6px;line-height:15px;font-weight:bold;color:#2a2a2a;white-space:nowrap"><span style="display:inline-block;text-align:left">Yellow<br>Green</span></div><div style="left:1106px;top:3px;width:62px;height:60.5px;background:linear-gradient(#9b9b9b,#7c7c7c 50%,#5f5f5f);border-top:1px solid #a6a6a6;border-radius:5px"></div><div style="left:1111px;top:9px;width:51px;height:15px;background:#e0a32e;border-radius:4px;box-shadow:inset 0 1px 2px rgba(0,0,0,.45),0 0 0 1px rgba(255,255,255,.18)"></div><div style="left:1096px;top:32px;width:82px;text-align:center;font-size:12.6px;line-height:15px;font-weight:bold;color:#2a2a2a;white-space:nowrap"><span style="display:inline-block;text-align:left">Orange<br>Yellow</span></div><div style="left:1171px;top:3px;width:62px;height:60.5px;background:linear-gradient(#9b9b9b,#7c7c7c 50%,#5f5f5f);border-top:1px solid #a6a6a6;border-radius:5px"></div><div style="left:1176px;top:9px;width:51px;height:30px;background:#383d96;border-radius:4px;box-shadow:inset 0 1px 2px rgba(0,0,0,.45),0 0 0 1px rgba(255,255,255,.18)"></div><div style="left:1161px;top:47px;width:82px;text-align:center;font-size:12.6px;line-height:15px;font-weight:bold;color:#2a2a2a;white-space:nowrap"><span style="display:inline-block;text-align:left">Blue</span></div><div style="left:1236px;top:3px;width:62px;height:60.5px;background:linear-gradient(#9b9b9b,#7c7c7c 50%,#5f5f5f);border-top:1px solid #a6a6a6;border-radius:5px"></div><div style="left:1241px;top:9px;width:51px;height:30px;background:#469449;border-radius:4px;box-shadow:inset 0 1px 2px rgba(0,0,0,.45),0 0 0 1px rgba(255,255,255,.18)"></div><div style="left:1226px;top:47px;width:82px;text-align:center;font-size:12.6px;line-height:15px;font-weight:bold;color:#2a2a2a;white-space:nowrap"><span style="display:inline-block;text-align:left">Green</span></div></div>
<div style="left:0px;top:932px;width:1265px;height:13px;background:#636363"></div><div style="left:16px;top:933px;width:797px;height:11px;background:#434343;border-radius:5px"></div><div style="left:1px;top:933px;width:14px;height:11px;background:#8a8a8a;border:1px solid #aaa;border-radius:2px"></div><div style="left:1250px;top:933px;width:14px;height:11px;background:#8a8a8a;border:1px solid #aaa;border-radius:2px"></div><svg width="1664" height="945"><path d="M11 934.5 v8 l-6 -4 z" fill="#222"/><path d="M1254 934.5 v8 l6 -4 z" fill="#222"/></svg>
<div style="left:1264.500px;top:870.500px;width:61px;height:80px;background:linear-gradient(#a2a2a2,#8a8a8a 40%,#646464);border-top:1px solid #b4b4b4;border-radius:5px 5px 0 0"></div>
<div style="left:1265px;top:893px;width:60px;height:1.2px;background:#444"></div><div style="left:1265px;top:894.200px;width:60px;height:1px;background:#9c9c9c"></div>
<div style="left:1286px;top:872.500px;width:19px;height:19px;border-radius:10px;background:linear-gradient(#6c6c6c,#a8a8a8)"></div>
<div style="left:1275.500px;top:901px;width:39.500px;height:39.500px;border:3.500px solid #262626;border-radius:7px;background:linear-gradient(#c2c2c2,#b8b8b8 49%,#949494 51%,#9c9c9c)"></div>
<div style="left:1287px;top:912px;width:17px;height:17px;background:linear-gradient(#2a2a2a,#1c1c1c 49%,#000 51%)"></div>
<div style="left:1326px;top:870px;width:58px;height:38px;background:linear-gradient(#ababab,#8e8e8e 50%,#6e6e6e);border-left:1px solid #3a3a3a;border-top:1px solid #b8b8b8"></div>
<div style="left:1342.5px;top:877px;width:25px;height:25px;border-radius:13px;background:linear-gradient(#6c6c6c,#adadad)"></div>
<div style="left:1384px;top:870px;width:56px;height:38px;background:linear-gradient(#ababab,#8e8e8e 50%,#6e6e6e);border-left:1px solid #3a3a3a;border-top:1px solid #b8b8b8"></div>
<div style="left:1399.5px;top:877px;width:25px;height:25px;border-radius:13px;background:linear-gradient(#6c6c6c,#adadad)"></div>
<div style="left:1440px;top:870px;width:56px;height:38px;background:linear-gradient(#ababab,#8e8e8e 50%,#6e6e6e);border-left:1px solid #3a3a3a;border-top:1px solid #b8b8b8"></div>
<div style="left:1456.5px;top:877px;width:25px;height:25px;border-radius:13px;background:linear-gradient(#6c6c6c,#adadad)"></div>
<div style="left:1498px;top:870px;width:55px;height:38px;background:linear-gradient(#ababab,#8e8e8e 50%,#6e6e6e);border-left:1px solid #3a3a3a;border-top:1px solid #b8b8b8"></div>
<div style="left:1513.0px;top:877px;width:25px;height:25px;border-radius:13px;background:linear-gradient(#6c6c6c,#adadad)"></div>
<div style="left:1553px;top:870px;width:56px;height:38px;background:linear-gradient(#3a3a3a,#2e2e2e);border-left:1px solid #2a2a2a;border-top:1px solid #3c3c3c"></div>
<div style="left:1568.5px;top:877px;width:25px;height:25px;border-radius:13px;background:linear-gradient(#2a2a2a,#3c3c3c)"></div>
<div style="left:1609px;top:870px;width:61px;height:38px;background:linear-gradient(#3a3a3a,#2e2e2e);border-left:1px solid #2a2a2a;border-top:1px solid #3c3c3c"></div>
<div style="left:1624.5px;top:877px;width:25px;height:25px;border-radius:13px;background:linear-gradient(#2a2a2a,#3c3c3c)"></div>
<div style="left:1326px;top:910px;width:170px;height:36px;background:linear-gradient(#b0b0b0,#949494 45%,#767676);border-left:1px solid #c0c0c0;border-top:1px solid #c8c8c8"></div>
<div style="left:1498px;top:910px;width:170px;height:36px;background:linear-gradient(#b0b0b0,#949494 45%,#767676);border-left:1px solid #c0c0c0;border-top:1px solid #c8c8c8"></div>
<div style="left:1353px;top:917px;width:24px;height:24px;border-radius:12px;background:linear-gradient(#888,#b4b4b4)"></div>
<div style="left:1619px;top:917px;width:24px;height:24px;border-radius:12px;background:linear-gradient(#888,#b4b4b4)"></div>
<div style="left:1398px;top:912px;font-size:28.5px;line-height:32px;color:#333;white-space:nowrap;-webkit-text-stroke:.5px #333;filter:blur(.4px)">Back</div>
<div style="left:1531px;top:912px;font-size:28.5px;line-height:32px;color:#333;white-space:nowrap;-webkit-text-stroke:.5px #333;filter:blur(.4px);letter-spacing:1.5px">Next</div>
<svg width="1664" height="945"><g fill="#333" stroke="none"><path d="M1290 884.500 l5.400 -5.600 l5.400 5.600 z"/><rect x="1350" y="884" width="10.5" height="10.5"/><path d="M1408 882.5 v13 l10 -6.5 z"/></g><g fill="none" stroke="#333" stroke-width="2"><path d="M1465.500 883.500 h-3.500 v12 h3.500 M1472.500 883.500 h3.500 v12 h-3.500" stroke-width="2.4"/><path d="M1466 889.500 h6" stroke-dasharray="1.500 1.500" stroke-width="1.800"/><path d="M1525.5 889 c-2 -3.5 -7 -3.5 -7 0 c0 3.500 5 3.500 7 0 c2 -3.500 7 -3.500 7 0 c0 3.500 -5 3.500 -7 0 z" stroke-width="1.8"/><path d="M1363 923 l-4.500 5.500 l4.500 5.500 M1369.500 923 l-4.500 5.500 l4.500 5.500" stroke-width="2.3"/><path d="M1626.500 923 l4.500 5.500 l-4.500 5.500 M1633 923 l4.500 5.500 l-4.500 5.500" stroke-width="2.3"/></g><g fill="none" stroke="#222" stroke-width="2.6"><path d="M1575 886.500 a6.500 6.500 0 0 1 11.500 -2 M1587.500 891.500 a6.500 6.500 0 0 1 -11.500 2"/></g><path d="M1588.500 880 v6 h-6 z M1573.500 898 v-6 h6 z" fill="#222"/></svg>
</div>
</body></html>
